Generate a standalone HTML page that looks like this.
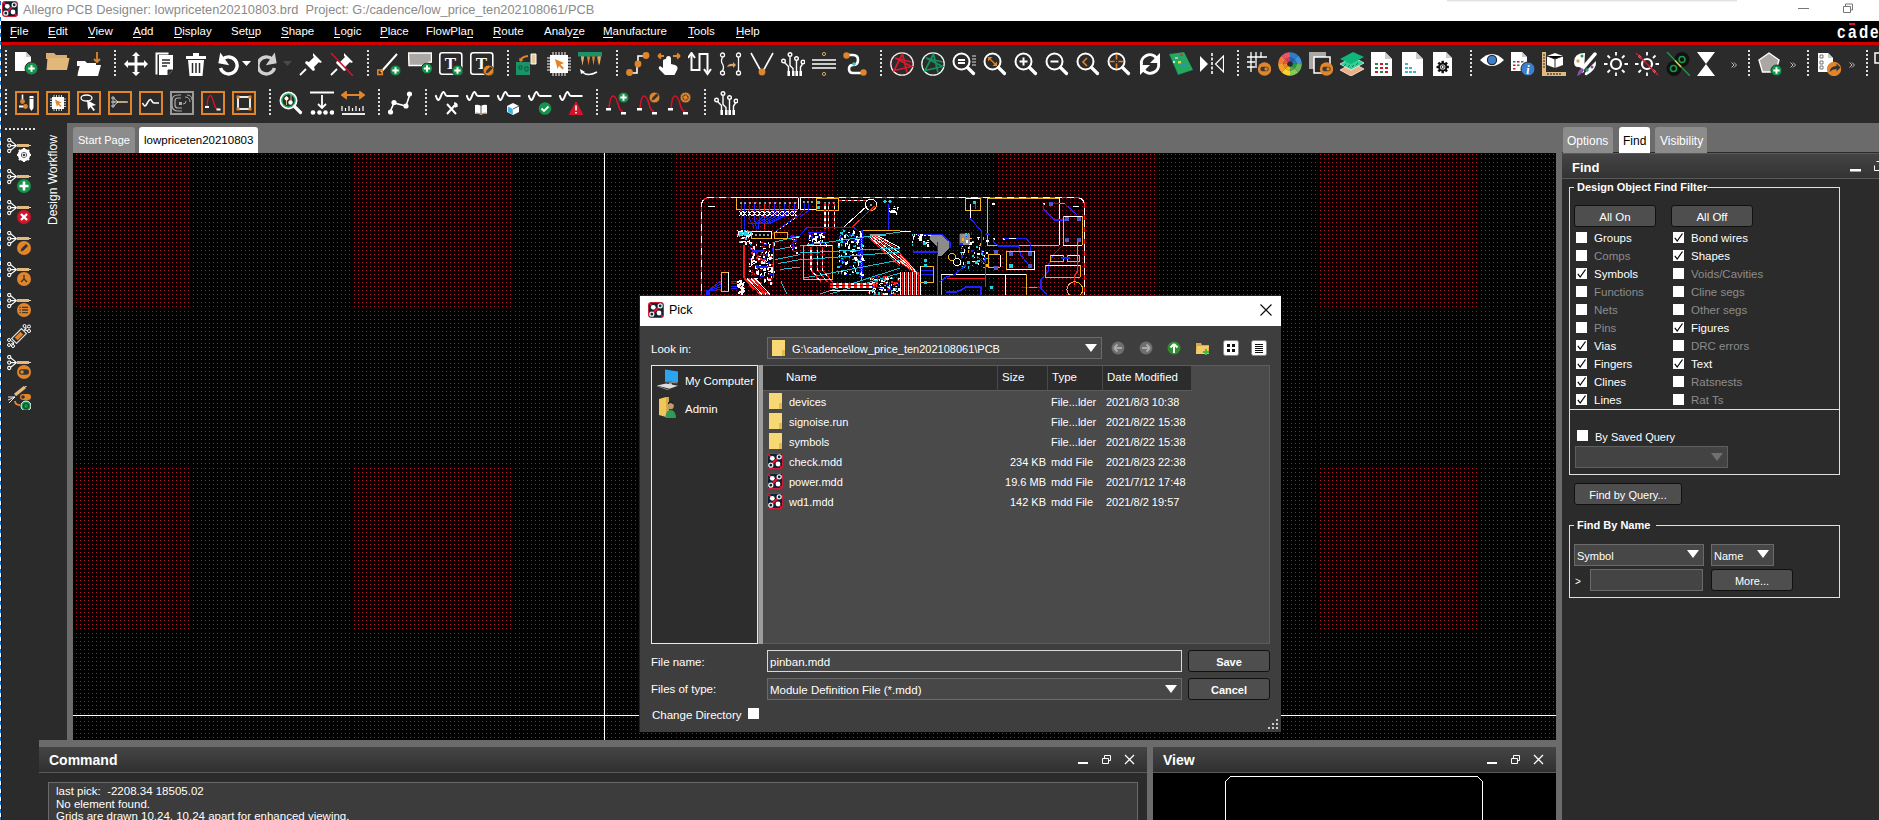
<!DOCTYPE html>
<html><head><meta charset="utf-8">
<style>
*{margin:0;padding:0;box-sizing:border-box}
html,body{width:1879px;height:820px;overflow:hidden;background:#2b2b2b;font-family:"Liberation Sans",sans-serif;font-size:12px;color:#fff}
.a{position:absolute}
.t{position:absolute;white-space:nowrap;line-height:1}
#title{left:0;top:0;width:1879px;height:21px;background:#fff}
#menu{left:0;top:21px;width:1879px;height:21px;background:#000}
#redline{left:0;top:42px;width:1879px;height:3px;background:#d00000}
.mi{position:absolute;top:24px;font-size:11.5px;color:#fff;white-space:nowrap;line-height:14px}
.mi u{text-decoration:none;border-bottom:1px solid #fff}
.grid{background-color:#000;background-image:radial-gradient(circle at 0.5px 0.5px,#b3112a 0.6px,transparent 0.6px);background-size:4px 4px}
.dotv{position:absolute;width:2px;background-image:linear-gradient(#ddd 50%,transparent 50%);background-size:2px 4px}
.doth{position:absolute;height:2px;background-image:linear-gradient(90deg,#ddd 50%,transparent 50%);background-size:4px 2px}
.cb{position:absolute;width:12px;height:12px;background:#fff}
.lbl{position:absolute;font-size:12px;white-space:nowrap;line-height:14px}
.dis{color:#8c8c8c}
.rp{font-size:11.5px;color:#fff;margin-top:1px}
.rp.dis{color:#8c8c8c}
.dlg{font-size:11.5px;color:#fff;margin-top:1px}
.btn{position:absolute;background:#4e4e4e;border:1px solid #111;border-radius:3px;color:#fff;text-align:center;font-size:12px;padding-top:1px}
</style></head><body>
<!-- title bar -->
<div id="title" class="a"></div>
<div class="t" style="left:23px;top:4px;font-size:12.8px;color:#8a8a8a">Allegro PCB Designer: lowpriceten20210803.brd&nbsp;&nbsp;Project: G:/cadence/low_price_ten202108061/PCB</div>

<!-- menu -->
<div id="menu" class="a"></div>
<div id="redline" class="a"></div>
<div class="mi" style="left:10px"><u>F</u>ile</div>
<div class="mi" style="left:48px"><u>E</u>dit</div>
<div class="mi" style="left:88px"><u>V</u>iew</div>
<div class="mi" style="left:133px"><u>A</u>dd</div>
<div class="mi" style="left:174px"><u>D</u>isplay</div>
<div class="mi" style="left:231px">Set<u>u</u>p</div>
<div class="mi" style="left:281px"><u>S</u>hape</div>
<div class="mi" style="left:334px"><u>L</u>ogic</div>
<div class="mi" style="left:380px"><u>P</u>lace</div>
<div class="mi" style="left:426px">FlowPla<u>n</u></div>
<div class="mi" style="left:493px"><u>R</u>oute</div>
<div class="mi" style="left:544px">Analy<u>z</u>e</div>
<div class="mi" style="left:603px"><u>M</u>anufacture</div>
<div class="mi" style="left:688px"><u>T</u>ools</div>
<div class="mi" style="left:736px"><u>H</u>elp</div>


<!-- TOOLBAR START -->
<div class="dotv" style="left:5px;top:50px;height:26px"></div>
<div class="dotv" style="left:114px;top:50px;height:26px"></div>
<div class="dotv" style="left:367px;top:50px;height:26px"></div>
<div class="dotv" style="left:507px;top:50px;height:26px"></div>
<div class="dotv" style="left:616px;top:50px;height:26px"></div>
<div class="dotv" style="left:880px;top:50px;height:26px"></div>
<div class="dotv" style="left:1237px;top:50px;height:26px"></div>
<div class="dotv" style="left:1470px;top:50px;height:26px"></div>
<div class="dotv" style="left:1748px;top:50px;height:26px"></div>
<div class="dotv" style="left:1807px;top:50px;height:26px"></div>
<div class="dotv" style="left:1866px;top:50px;height:26px"></div>
<div class="dotv" style="left:5px;top:89px;height:26px"></div>
<div class="dotv" style="left:269px;top:89px;height:26px"></div>
<div class="dotv" style="left:378px;top:89px;height:26px"></div>
<div class="dotv" style="left:425px;top:89px;height:26px"></div>
<div class="dotv" style="left:596px;top:89px;height:26px"></div>
<div class="dotv" style="left:704px;top:89px;height:26px"></div>
<svg class="a" style="left:15px;top:52px" width="24" height="24" viewBox="0 0 24 24"><path d="M0 0h11l5 5v14h-16z" fill="#fff"/><path d="M11 0v5h5" fill="#ccc"/><circle cx="16.5" cy="16.5" r="6.5" fill="#14934a" stroke="#2b2b2b" stroke-width="1"/><path d="M13.3 16.5h6.4M16.5 13.3v6.4" stroke="#fff" stroke-width="2"/></svg>
<svg class="a" style="left:46px;top:52px" width="24" height="24" viewBox="0 0 24 24"><path d="M0 1h8l2 2h11v4H0z" fill="#d9ae70"/><path d="M1.5 6h22l-2.5 12H0.5z" fill="#e2b77a"/></svg>
<svg class="a" style="left:77px;top:52px" width="24" height="24" viewBox="0 0 24 24"><path d="M0 9h8l2 2h9v3H0z" fill="#fff"/><path d="M3 13h21l-3 11H0z" fill="#fff"/><path d="M0 14v10" stroke="#2b2b2b" stroke-width="1"/><path d="M20 0v10M17 7l3 3 3-3" stroke="#e0852a" stroke-width="1.8" fill="none"/></svg>
<svg class="a" style="left:124px;top:52px" width="24" height="24" viewBox="0 0 24 24"><path d="M12 0l4 4h-2.6v6.6H20V8l4 4-4 4v-2.6h-6.6V20H16l-4 4-4-4h2.6v-6.6H4V16l-4-4 4-4v2.6h6.6V4H8z" fill="#fff"/></svg>
<svg class="a" style="left:155px;top:52px" width="24" height="24" viewBox="0 0 24 24"><path d="M0.5 0.5h13v2H2.5v20h-2z" fill="#fff"/><path d="M4 3h14v15l-5 5H4z" fill="#fff"/><path d="M7 8h8M7 11h8M7 14h5" stroke="#2b2b2b" stroke-width="1.6"/><path d="M13 23v-5h5" fill="#2b2b2b" stroke="#2b2b2b"/></svg>
<svg class="a" style="left:186px;top:52px" width="24" height="24" viewBox="0 0 24 24"><path d="M0 4h20v3H0z" fill="#fff"/><path d="M7 1h6v3H7z" fill="#fff"/><path d="M2 8h16l-1.5 16h-13z" fill="#fff"/><path d="M6.5 11v10M10 11v10M13.5 11v10" stroke="#2b2b2b" stroke-width="1.5"/></svg>
<svg class="a" style="left:217px;top:52px" width="24" height="24" viewBox="0 0 24 24"><path d="M5.5 7.5A8.5 8.5 0 1 1 3.5 16" fill="none" stroke="#fff" stroke-width="3.4"/><path d="M2 1v11h11z" fill="#fff" transform="rotate(10 6 8)"/></svg>
<svg class="a" style="left:258px;top:52px" width="24" height="24" viewBox="0 0 24 24"><path d="M14.5 7.5A8.5 8.5 0 1 0 16.5 16" fill="none" stroke="#d0d0d0" stroke-width="3.4"/><path d="M18 1v11H7z" fill="#d0d0d0" transform="rotate(-10 14 8)"/></svg>
<svg class="a" style="left:299px;top:52px" width="24" height="24" viewBox="0 0 24 24"><path d="M14 1l9 9-2 1-1-1-5 5 1 3-2 1-8-8 1-2 3 1 5-5-1-1z" fill="#fff"/><path d="M7 17L1 23" stroke="#fff" stroke-width="1.8"/></svg>
<svg class="a" style="left:330px;top:52px" width="24" height="24" viewBox="0 0 24 24"><path d="M14 1l9 9-2 1-1-1-5 5 1 3-2 1-8-8 1-2 3 1 5-5-1-1z" fill="#fff"/><path d="M7 17L1 23" stroke="#fff" stroke-width="1.8"/></svg>
<svg class="a" style="left:377px;top:52px" width="24" height="24" viewBox="0 0 24 24"><path d="M4 20L20 2" stroke="#fff" stroke-width="2"/><rect x="0.8" y="18" width="4.5" height="4.5" fill="none" stroke="#e0852a" stroke-width="1.6"/><circle cx="18.5" cy="18.5" r="5.5" fill="#14934a" stroke="#2b2b2b" stroke-width="1"/><path d="M15.3 18.5h6.4M18.5 15.3v6.4" stroke="#fff" stroke-width="2"/></svg>
<svg class="a" style="left:408px;top:52px" width="24" height="24" viewBox="0 0 24 24"><path d="M0.5 1h23v9q-5 0-8 3.5h-14.5z" fill="#aaa7a5" stroke="#fff" stroke-width="1.4"/><circle cx="19" cy="16.5" r="5.5" fill="#14934a" stroke="#2b2b2b" stroke-width="1"/><path d="M15.8 16.5h6.4M19 13.3v6.4" stroke="#fff" stroke-width="2"/></svg>
<svg class="a" style="left:439px;top:52px" width="24" height="24" viewBox="0 0 24 24"><rect x="0.8" y="0.8" width="22" height="21.5" rx="2.5" fill="none" stroke="#fff" stroke-width="1.6"/><text x="11.5" y="17" font-family="Liberation Serif" font-size="17" font-weight="bold" fill="#fff" text-anchor="middle">T</text></svg>
<svg class="a" style="left:470px;top:52px" width="24" height="24" viewBox="0 0 24 24"><rect x="0.8" y="0.8" width="22" height="21.5" rx="2.5" fill="none" stroke="#fff" stroke-width="1.6"/><text x="11.5" y="17" font-family="Liberation Serif" font-size="17" font-weight="bold" fill="#fff" text-anchor="middle">T</text></svg>
<svg class="a" style="left:516px;top:52px" width="24" height="24" viewBox="0 0 24 24"><path d="M0 10h14v13H0z" fill="#199367"/><path d="M3 14h3v3H3zM9 15h3v4H9z" fill="none" stroke="#0c5c3e" stroke-width="1"/><path d="M15 2h5v10h-5z" fill="#e6c99b" stroke="#fff"/><path d="M4 9q1-4 8-5" stroke="#e0852a" stroke-width="2" fill="none"/><path d="M3 6l1.5 4 3-2z" fill="#e0852a"/></svg>
<svg class="a" style="left:547px;top:52px" width="24" height="24" viewBox="0 0 24 24"><rect x="3" y="3" width="18" height="18" fill="#fff"/><path d="M6 0v24M9 0v24M12 0v24M15 0v24M18 0v24M0 6h24M0 9h24M0 12h24M0 15h24M0 18h24" stroke="#fff" stroke-width="1"/><rect x="4" y="4" width="16" height="16" fill="#fff"/><path d="M8 7l9 4-3.5 1.5L17 16l-1.5 1.5-3.5-3.5L10.5 17z" fill="#e0852a"/></svg>
<svg class="a" style="left:578px;top:52px" width="24" height="24" viewBox="0 0 24 24"><rect x="0" y="0" width="24" height="4.5" fill="#199367"/><path d="M3 4.5h3l-1.5 9zM9 4.5h3l-1.5 9zM14 4.5h3l-1.5 9zM19 4.5h3l-1.5 9z" fill="#e0852a"/><path d="M3 4.5h3l-1.5 9z" fill="#d8b27c"/><path d="M20 4.5h3l-1.5 9z" fill="#d8b27c"/><path d="M4 20q6 5 15 0" stroke="#fff" stroke-width="1.6" fill="none"/><path d="M2 17l1 5 4-2z" fill="#fff"/></svg>
<svg class="a" style="left:626px;top:52px" width="24" height="24" viewBox="0 0 24 24"><path d="M3 21h8v-9h1v-8h8" stroke="#fff" stroke-width="1.6" fill="none"/><circle cx="3.5" cy="20.5" r="3.4" fill="#e0852a"/><circle cx="12" cy="12" r="3.4" fill="#e0852a"/><circle cx="20" cy="3.5" r="3.4" fill="#e0852a"/></svg>
<svg class="a" style="left:657px;top:52px" width="24" height="24" viewBox="0 0 24 24"><path d="M9 7q0-3 2.5-3t2.5 3v5l4 1q3 1 2.5 4l-3 6H8l-6-6q-1-2 1-3l3 2V9q0-2 3-2z" fill="#fff"/><path d="M1 4h6M1 4l3-2.5M1 4l3 2.5M16 4h7M23 4l-3-2.5M23 4l-3 2.5" stroke="#e0852a" stroke-width="1.8" fill="none"/></svg>
<svg class="a" style="left:688px;top:52px" width="24" height="24" viewBox="0 0 24 24"><path d="M3.5 3V18H11.5V2H19.5V20" stroke="#fff" stroke-width="2" fill="none"/><path d="M0 6l3.5-5 3.5 5M16 17l3.5 5 3.5-5" stroke="#fff" stroke-width="2" fill="none"/></svg>
<svg class="a" style="left:719px;top:52px" width="24" height="24" viewBox="0 0 24 24"><circle cx="3.5" cy="3" r="2" fill="none" stroke="#fff" stroke-width="1.3"/><circle cx="3.5" cy="21" r="2" fill="none" stroke="#fff" stroke-width="1.3"/><circle cx="19.5" cy="3" r="2" fill="none" stroke="#fff" stroke-width="1.3"/><circle cx="19.5" cy="21" r="2" fill="none" stroke="#fff" stroke-width="1.3"/><path d="M3.5 5q-2 4 0 7t0 7" stroke="#fff" stroke-width="1.3" fill="none"/><path d="M19.5 5v14" stroke="#fff" stroke-width="1.3"/><path d="M8 15q2-4 6-3v-2l3 3-3 3v-2q-3 0-6 1z" fill="#d8a66a"/></svg>
<svg class="a" style="left:750px;top:52px" width="24" height="24" viewBox="0 0 24 24"><path d="M1 1l11 20L23 1" stroke="#fff" stroke-width="1.6" fill="none"/><circle cx="12" cy="20" r="3.4" fill="#e0852a"/></svg>
<svg class="a" style="left:781px;top:52px" width="24" height="24" viewBox="0 0 24 24"><g stroke="#fff" stroke-width="1.4" fill="none"><circle cx="9" cy="2.5" r="1.8"/><circle cx="2.5" cy="9" r="1.8"/><circle cx="15.5" cy="6.5" r="1.8"/><circle cx="22" cy="10" r="1.8"/><path d="M9 4.5v9l3 3v7M3.5 10.5l4 4v9M15.5 8.5v15M21.5 12l-2 3v8.5"/></g><path d="M6.5 19h2.5v5H6.5zM11 19h2.5v5H11zM14.5 19h2.5v5h-2.5zM18.5 19h2.5v5h-2.5z" fill="#fff"/></svg>
<svg class="a" style="left:812px;top:52px" width="24" height="24" viewBox="0 0 24 24"><path d="M0 8h24M0 12h24M0 16h24" stroke="#fff" stroke-width="1.6"/><circle cx="12" cy="2" r="1.6" fill="none" stroke="#d8a66a" stroke-width="1"/><circle cx="12" cy="22" r="1.6" fill="none" stroke="#d8a66a" stroke-width="1"/></svg>
<svg class="a" style="left:843px;top:52px" width="24" height="24" viewBox="0 0 24 24"><path d="M3 3h7q5 0 5 5t-5 5q-4 0-4 4t4 4h10" stroke="#fff" stroke-width="2.6" fill="none"/><circle cx="3.5" cy="3.5" r="3.2" fill="#e0852a"/><circle cx="20.5" cy="20.5" r="3.2" fill="#e0852a"/><circle cx="11" cy="12" r="1.8" fill="#3cc3c8"/></svg>
<svg class="a" style="left:890px;top:52px" width="24" height="24" viewBox="0 0 24 24"><circle cx="12" cy="12" r="11.2" fill="none" stroke="#fbe9ea" stroke-width="1.3"/><path d="M12.5 2L4 18.5L21.5 14.5L5 6L21.5 10M12.5 2L17 20.5" stroke="#d7192d" stroke-width="1.7" fill="none"/></svg>
<svg class="a" style="left:921px;top:52px" width="24" height="24" viewBox="0 0 24 24"><circle cx="12" cy="12" r="11.2" fill="none" stroke="#e9f7f0" stroke-width="1.3"/><path d="M12.5 2L4 18.5L21.5 14.5L5 6L21.5 10M12.5 2L17 20.5" stroke="#14915e" stroke-width="1.7" fill="none"/></svg>
<svg class="a" style="left:952px;top:52px" width="24" height="24" viewBox="0 0 24 24"><circle cx="9.5" cy="9.5" r="8" fill="none" stroke="#fff" stroke-width="2"/><path d="M15.5 15.5l6 6" stroke="#fff" stroke-width="3.2" stroke-linecap="round"/><path d="M6 8h7M6 11h7" stroke="#fff" stroke-width="1.8"/><path d="M20 4h4M20 7h4M20 10h4M20 13h4" stroke="#ddd" stroke-width="1"/></svg>
<svg class="a" style="left:983px;top:52px" width="24" height="24" viewBox="0 0 24 24"><circle cx="9.5" cy="9.5" r="8" fill="none" stroke="#fff" stroke-width="2"/><path d="M15.5 15.5l6 6" stroke="#fff" stroke-width="3.2" stroke-linecap="round"/><path d="M7 7l5 5" stroke="#e0852a" stroke-width="1.3"/><path d="M5 5h4.5L5 9.5zM14 14h-4.5L14 9.5z" fill="#e0852a"/></svg>
<svg class="a" style="left:1014px;top:52px" width="24" height="24" viewBox="0 0 24 24"><circle cx="9.5" cy="9.5" r="8" fill="none" stroke="#fff" stroke-width="2"/><path d="M15.5 15.5l6 6" stroke="#fff" stroke-width="3.2" stroke-linecap="round"/><path d="M5.5 9.5h8M9.5 5.5v8" stroke="#fff" stroke-width="2"/></svg>
<svg class="a" style="left:1045px;top:52px" width="24" height="24" viewBox="0 0 24 24"><circle cx="9.5" cy="9.5" r="8" fill="none" stroke="#fff" stroke-width="2"/><path d="M15.5 15.5l6 6" stroke="#fff" stroke-width="3.2" stroke-linecap="round"/><path d="M5.5 9.5h8" stroke="#fff" stroke-width="2"/></svg>
<svg class="a" style="left:1076px;top:52px" width="24" height="24" viewBox="0 0 24 24"><circle cx="9.5" cy="9.5" r="8" fill="none" stroke="#fff" stroke-width="2"/><path d="M15.5 15.5l6 6" stroke="#fff" stroke-width="3.2" stroke-linecap="round"/><path d="M11 6l-4 4 4 4" stroke="#e0852a" stroke-width="1.6" fill="none"/></svg>
<svg class="a" style="left:1107px;top:52px" width="24" height="24" viewBox="0 0 24 24"><circle cx="9.5" cy="9.5" r="8" fill="none" stroke="#fff" stroke-width="2"/><path d="M15.5 15.5l6 6" stroke="#fff" stroke-width="3.2" stroke-linecap="round"/><path d="M2 9.5h15M9.5 2v15" stroke="#e0852a" stroke-width="1.6"/><circle cx="9.5" cy="9.5" r="2" fill="#2b2b2b"/><circle cx="9.5" cy="9.5" r="0.6" fill="#e0852a"/></svg>
<svg class="a" style="left:1138px;top:52px" width="24" height="24" viewBox="0 0 24 24"><path d="M3.5 13A8.5 8.5 0 0 1 18.5 6" stroke="#fff" stroke-width="3" fill="none"/><path d="M22 1v10H12z" fill="#fff"/><path d="M20.5 11A8.5 8.5 0 0 1 5.5 18" stroke="#fff" stroke-width="3" fill="none"/><path d="M2 23V13h10z" fill="#fff"/></svg>
<svg class="a" style="left:1169px;top:52px" width="24" height="24" viewBox="0 0 24 24"><path d="M0 2l15-2 9 18-15 5z" fill="#1d8f5a"/><path d="M1 2.5l14-2 8.5 17-14 4.5z" fill="#25a862"/><rect x="11" y="2" width="3" height="2" fill="#8b5a44"/><rect x="9" y="9" width="3" height="2.5" fill="#e8d33a"/><rect x="13" y="11" width="3" height="3" fill="#2a8fd6"/><rect x="6" y="5" width="3" height="2" fill="#bbb"/><circle cx="5" cy="10" r="1.2" fill="#9fd"/></svg>
<svg class="a" style="left:1200px;top:52px" width="24" height="24" viewBox="0 0 24 24"><path d="M0 4l8 8-8 8z" fill="#fff"/><path d="M12 1v22" stroke="#fff" stroke-width="1.6" stroke-dasharray="3 1.5"/><path d="M23.5 4l-8 8 8 8z" fill="none" stroke="#fff" stroke-width="1.2"/></svg>
<svg class="a" style="left:1247px;top:52px" width="24" height="24" viewBox="0 0 24 24"><path d="M4 0v20M9 0v16M14 0v6M0 5h20M0 10h8M0 15h8" stroke="#fff" stroke-width="1.3"/><circle cx="17.5" cy="17" r="6.7" fill="#e0852a"/><rect x="13.3" y="14.8" width="8.4" height="4.4" rx="2.2" fill="#3a3a3a"/><circle cx="19.1" cy="17" r="1.7" fill="#e0852a"/></svg>
<svg class="a" style="left:1278px;top:52px" width="24" height="24" viewBox="0 0 24 24"><path d="M12.00 0.20A11.8 11.8 0 0 1 20.34 3.66L16.60 7.40A6.5 6.5 0 0 0 12.00 5.50z" fill="#2f7bc8"/><path d="M20.34 3.66A11.8 11.8 0 0 1 23.80 12.00L18.50 12.00A6.5 6.5 0 0 0 16.60 7.40z" fill="#3f92d8"/><path d="M23.80 12.00A11.8 11.8 0 0 1 20.34 20.34L16.60 16.60A6.5 6.5 0 0 0 18.50 12.00z" fill="#65b85a"/><path d="M20.34 20.34A11.8 11.8 0 0 1 12.00 23.80L12.00 18.50A6.5 6.5 0 0 0 16.60 16.60z" fill="#8bc94f"/><path d="M12.00 23.80A11.8 11.8 0 0 1 3.66 20.34L7.40 16.60A6.5 6.5 0 0 0 12.00 18.50z" fill="#f9d22d"/><path d="M3.66 20.34A11.8 11.8 0 0 1 0.20 12.00L5.50 12.00A6.5 6.5 0 0 0 7.40 16.60z" fill="#f2a033"/><path d="M0.20 12.00A11.8 11.8 0 0 1 3.66 3.66L7.40 7.40A6.5 6.5 0 0 0 5.50 12.00z" fill="#f2793a"/><path d="M3.66 3.66A11.8 11.8 0 0 1 12.00 0.20L12.00 5.50A6.5 6.5 0 0 0 7.40 7.40z" fill="#ec5460"/><path d="M12.00 5.50A6.5 6.5 0 0 1 16.60 7.40L13.84 10.16A2.6 2.6 0 0 0 12.00 9.40z" fill="#255f9c"/><path d="M16.60 7.40A6.5 6.5 0 0 1 18.50 12.00L14.60 12.00A2.6 2.6 0 0 0 13.84 10.16z" fill="#2d72b0"/><path d="M18.50 12.00A6.5 6.5 0 0 1 16.60 16.60L13.84 13.84A2.6 2.6 0 0 0 14.60 12.00z" fill="#1f9a55"/><path d="M16.60 16.60A6.5 6.5 0 0 1 12.00 18.50L12.00 14.60A2.6 2.6 0 0 0 13.84 13.84z" fill="#4fa543"/><path d="M12.00 18.50A6.5 6.5 0 0 1 7.40 16.60L10.16 13.84A2.6 2.6 0 0 0 12.00 14.60z" fill="#f2b51c"/><path d="M7.40 16.60A6.5 6.5 0 0 1 5.50 12.00L9.40 12.00A2.6 2.6 0 0 0 10.16 13.84z" fill="#e98b22"/><path d="M5.50 12.00A6.5 6.5 0 0 1 7.40 7.40L10.16 10.16A2.6 2.6 0 0 0 9.40 12.00z" fill="#e85a35"/><path d="M7.40 7.40A6.5 6.5 0 0 1 12.00 5.50L12.00 9.40A2.6 2.6 0 0 0 10.16 10.16z" fill="#e0306a"/><circle cx="12" cy="12" r="2.6" fill="#2b2b2b"/></svg>
<svg class="a" style="left:1309px;top:52px" width="24" height="24" viewBox="0 0 24 24"><rect x="0" y="0" width="17" height="17" fill="#aaa7a5"/><rect x="5" y="5" width="16" height="16" fill="#2b2b2b" stroke="#fff" stroke-width="1.5"/><circle cx="17.5" cy="17" r="6.7" fill="#e0852a"/><rect x="13.3" y="14.8" width="8.4" height="4.4" rx="2.2" fill="#3a3a3a"/><circle cx="19.1" cy="17" r="1.7" fill="#e0852a"/></svg>
<svg class="a" style="left:1340px;top:52px" width="24" height="24" viewBox="0 0 24 24"><path d="M0 18l13-7 11 6-13 7z" fill="#eab186" stroke="#fff" stroke-width="0.7"/><path d="M0 12l13-7 11 6-13 7z" fill="#2ed19a" stroke="#fff" stroke-width="0.7"/><path d="M4 14l2-2M8 15l2-2M12 15l2-2M16 13l2-2" stroke="#167a55" stroke-width="1"/><path d="M0 7l13-7 11 5-13 7z" fill="#0fb87a"/></svg>
<svg class="a" style="left:1371px;top:52px" width="24" height="24" viewBox="0 0 24 24"><path d="M0 0h14l7 7v17h-21z" fill="#fff"/><path d="M14 0v7h7" fill="#ccc"/><g><rect x="4" y="11" width="3" height="2" fill="#1a8a4a"/><rect x="9" y="11" width="3" height="2" fill="#d3132a"/><rect x="14" y="11" width="3" height="2" fill="#1a8a4a"/><rect x="4" y="15" width="3" height="2" fill="#1a8a4a"/><rect x="9" y="15" width="3" height="2" fill="#d3132a"/><rect x="14" y="15" width="3" height="2" fill="#d3132a"/><rect x="4" y="19" width="3" height="2" fill="#d3132a"/><rect x="9" y="19" width="3" height="2" fill="#1a8a4a"/><rect x="14" y="19" width="3" height="2" fill="#d3132a"/></g></svg>
<svg class="a" style="left:1402px;top:52px" width="24" height="24" viewBox="0 0 24 24"><path d="M0 0h14l7 7v17h-21z" fill="#fff"/><path d="M14 0v7h7" fill="#ccc"/><g fill="#3ab8c8"><rect x="3" y="11" width="3" height="2"/><rect x="3" y="15" width="3" height="2"/><rect x="7" y="15" width="3" height="2"/><rect x="3" y="19" width="3" height="2"/><rect x="7" y="19" width="3" height="2"/><rect x="11" y="19" width="3" height="2"/></g></svg>
<svg class="a" style="left:1433px;top:52px" width="24" height="24" viewBox="0 0 24 24"><path d="M0 0h13l6 6v18h-19z" fill="#fff"/><path d="M13 0v6h6" fill="#ccc"/><rect x="8.5" y="8.8" width="2.4" height="2.6" fill="#111" transform="rotate(0 9.7 15)"/><rect x="8.5" y="8.8" width="2.4" height="2.6" fill="#111" transform="rotate(45 9.7 15)"/><rect x="8.5" y="8.8" width="2.4" height="2.6" fill="#111" transform="rotate(90 9.7 15)"/><rect x="8.5" y="8.8" width="2.4" height="2.6" fill="#111" transform="rotate(135 9.7 15)"/><rect x="8.5" y="8.8" width="2.4" height="2.6" fill="#111" transform="rotate(180 9.7 15)"/><rect x="8.5" y="8.8" width="2.4" height="2.6" fill="#111" transform="rotate(225 9.7 15)"/><rect x="8.5" y="8.8" width="2.4" height="2.6" fill="#111" transform="rotate(270 9.7 15)"/><rect x="8.5" y="8.8" width="2.4" height="2.6" fill="#111" transform="rotate(315 9.7 15)"/><circle cx="9.7" cy="15" r="4.6" fill="#111"/><circle cx="9.7" cy="15" r="2.6" fill="#fff"/><circle cx="9.7" cy="15" r="1.5" fill="none" stroke="#111" stroke-width="0.9"/></svg>
<svg class="a" style="left:1480px;top:52px" width="24" height="24" viewBox="0 0 24 24"><path d="M0 8q12-12 24 0q-12 12-24 0z" fill="#fff"/><circle cx="12" cy="8" r="5.2" fill="#2b2b2b"/><circle cx="12" cy="8" r="4" fill="#3d7fcc"/></svg>
<svg class="a" style="left:1511px;top:52px" width="24" height="24" viewBox="0 0 24 24"><path d="M0 0h11l5 5v14h-16z" fill="#fff"/><path d="M11 0v5h5" fill="#ccc"/><g><rect x="2" y="9" width="2.5" height="1.5" fill="#1a8a4a"/><rect x="6" y="9" width="2.5" height="1.5" fill="#d3132a"/><rect x="10" y="9" width="2.5" height="1.5" fill="#1a8a4a"/><rect x="2" y="12.5" width="2.5" height="1.5" fill="#d3132a"/><rect x="6" y="12.5" width="2.5" height="1.5" fill="#1a8a4a"/><rect x="2" y="16" width="2.5" height="1.5" fill="#d3132a"/></g><circle cx="17" cy="17" r="7" fill="#3d7fcc" stroke="#2b2b2b"/><text x="17" y="21.5" font-family="Liberation Serif" font-style="italic" font-weight="bold" font-size="12" fill="#fff" text-anchor="middle">i</text></svg>
<svg class="a" style="left:1542px;top:52px" width="24" height="24" viewBox="0 0 24 24"><path d="M0 0h4v20h20v4H0z" fill="#e0b97d"/><path d="M1 3h2M1 6h2M1 9h2M1 12h2M1 15h2M6 21v2M9 21v2M12 21v2M15 21v2M18 21v2" stroke="#2b2b2b" stroke-width="1.2"/><path d="M13 1l8 3v9l-8 3-8-3V4z" fill="#fff"/><path d="M5 4l8 3 8-3M13 7v9" stroke="#2b2b2b" stroke-width="1"/></svg>
<svg class="a" style="left:1573px;top:52px" width="24" height="24" viewBox="0 0 24 24"><path d="M12 1q-11 0-11 9q0 5 4 5t3 3q0 4 3 2" fill="#fff"/><path d="M22 2L10 16" stroke="#fff" stroke-width="3.5" stroke-linecap="round"/><path d="M9 16q-4 2-5 8 5-2 7-6z" fill="#8c4cb0"/><path d="M23 9q1 8-9 14-3 1-2-2l3-4z" fill="#fff"/><circle cx="9" cy="4" r="1.5" fill="#1a9a4e"/><circle cx="5" cy="9" r="1.7" fill="#d3a668"/><circle cx="14" cy="18" r="1.7" fill="#2aa37a"/><circle cx="19" cy="15" r="1.5" fill="#8c4cb0"/></svg>
<svg class="a" style="left:1604px;top:52px" width="24" height="24" viewBox="0 0 24 24"><circle cx="12" cy="12" r="5" fill="none" stroke="#fff" stroke-width="2.2"/><path d="M12 0v3.5M12 20.5V24M0 12h3.5M20.5 12H24M3.5 3.5l2.5 2.5M18 18l2.5 2.5M3.5 20.5L6 18M18 6l2.5-2.5" stroke="#fff" stroke-width="1.8"/></svg>
<svg class="a" style="left:1635px;top:52px" width="24" height="24" viewBox="0 0 24 24"><circle cx="12" cy="12" r="5" fill="none" stroke="#fff" stroke-width="2.2"/><path d="M12 0v3.5M12 20.5V24M0 12h3.5M20.5 12H24M3.5 3.5l2.5 2.5M18 18l2.5 2.5M3.5 20.5L6 18M18 6l2.5-2.5" stroke="#fff" stroke-width="1.8"/><path d="M1 1l22 22" stroke="#d3132a" stroke-width="1.6"/></svg>
<svg class="a" style="left:1666px;top:52px" width="24" height="24" viewBox="0 0 24 24"><circle cx="16" cy="7.5" r="7.5" fill="#111"/><circle cx="8" cy="16.5" r="7.5" fill="#111"/><circle cx="16" cy="7.5" r="3" fill="none" stroke="#1a9a4e" stroke-width="1.6"/><circle cx="7.5" cy="16.5" r="3" fill="none" stroke="#1a9a4e" stroke-width="1.6"/><path d="M1 0l23 24" stroke="#1a9a4e" stroke-width="1.4"/><path d="M9 8.5l6 6.5" stroke="#e6d23a" stroke-width="1.4"/></svg>
<svg class="a" style="left:1697px;top:52px" width="24" height="24" viewBox="0 0 24 24"><path d="M0 0h18L9 12zM0 24h18L9 12z" fill="#fff"/></svg>
<svg class="a" style="left:1758px;top:52px" width="24" height="24" viewBox="0 0 24 24"><path d="M11 1l10 7-3.5 12H4.5L1 8z" fill="#aaa7a5" stroke="#fff" stroke-width="1.4"/><circle cx="18.5" cy="18.5" r="5.5" fill="#14934a" stroke="#2b2b2b" stroke-width="1"/><path d="M15.3 18.5h6.4M18.5 15.3v6.4" stroke="#fff" stroke-width="2"/></svg>
<svg class="a" style="left:1817px;top:52px" width="24" height="24" viewBox="0 0 24 24"><path d="M1 1h10l5 5v14H1z" fill="#fff"/><path d="M11 1v5h5" fill="#ccc"/><path d="M3 3h3v3H3zM3 9h3v3H3zM3 14h3v3H3z" fill="none" stroke="#555" stroke-width="0.8"/><circle cx="17" cy="17" r="7.2" fill="#e0852a"/><path d="M12.5 20q1-6 7-6v-2.5l4 4-4 4V17q-4 0-7 3z" fill="#333"/></svg>
<svg class="a" style="left:439px;top:52px" width="24" height="24" viewBox="0 0 24 24"><circle cx="18.5" cy="18.5" r="5.5" fill="#14934a" stroke="#2b2b2b" stroke-width="1"/><path d="M15.3 18.5h6.4M18.5 15.3v6.4" stroke="#fff" stroke-width="2"/></svg>
<svg class="a" style="left:470px;top:52px" width="24" height="24" viewBox="0 0 24 24"><circle cx="18.5" cy="18.5" r="5.5" fill="#e0852a" stroke="#2b2b2b" stroke-width="1"/><path d="M15.5 21.5l1-3 4-4 2 2-4 4z" fill="#333"/></svg>
<svg class="a" style="left:330px;top:52px" width="24" height="24" viewBox="0 0 24 24"><path d="M1 1l22 23" stroke="#d3132a" stroke-width="1.6"/></svg>
<svg class="a" style="left:242px;top:61px" width="9" height="6" viewBox="0 0 9 6"><path d="M0 0h9l-4.5 5z" fill="#fff"/></svg>
<svg class="a" style="left:283px;top:61px" width="9" height="6" viewBox="0 0 9 6"><path d="M0 0h9l-4.5 5z" fill="#4a4a4a"/></svg>
<svg class="a" style="left:1731px;top:62px" width="6" height="6" viewBox="0 0 6 6"><path d="M0.5 0.5l2.5 2.5-2.5 2.5M3 0.5l2.5 2.5L3 5.5" stroke="#ccc" stroke-width="0.9" fill="none"/></svg>
<svg class="a" style="left:1790px;top:62px" width="6" height="6" viewBox="0 0 6 6"><path d="M0.5 0.5l2.5 2.5-2.5 2.5M3 0.5l2.5 2.5L3 5.5" stroke="#ccc" stroke-width="0.9" fill="none"/></svg>
<svg class="a" style="left:1849px;top:62px" width="6" height="6" viewBox="0 0 6 6"><path d="M0.5 0.5l2.5 2.5-2.5 2.5M3 0.5l2.5 2.5L3 5.5" stroke="#ccc" stroke-width="0.9" fill="none"/></svg>
<svg class="a" style="left:1874px;top:52px" width="5" height="12" viewBox="0 0 5 12"><path d="M1 1h5v10H1z" fill="none" stroke="#fff" stroke-width="1.5"/></svg>
<svg class="a" style="left:15px;top:91px" width="24" height="24" viewBox="0 0 24 24"><rect x="1" y="1" width="22" height="22" fill="#2b2b2b" stroke="#e0852a" stroke-width="2"/><path d="M7.5 3.5v6" stroke="#fff" stroke-width="1.6"/><circle cx="7.5" cy="10.5" r="2.4" fill="#e0852a"/><path d="M4 15.5h6" stroke="#fff" stroke-width="2"/><circle cx="10.5" cy="15.5" r="2.4" fill="#e0852a"/><path d="M14.5 5h4v12l-2 3-2-3z" fill="#fff"/><path d="M14.5 7.5h4" stroke="#2b2b2b" stroke-width="0.8"/></svg>
<svg class="a" style="left:46px;top:91px" width="24" height="24" viewBox="0 0 24 24"><rect x="1" y="1" width="22" height="22" fill="#2b2b2b" stroke="#e0852a" stroke-width="2"/><rect x="6" y="6" width="12" height="12" fill="#fff"/><path d="M8 4v16M10.5 4v16M13 4v16M15.5 4v16M4 8h16M4 10.5h16M4 13h16M4 15.5h16" stroke="#fff" stroke-width="0.8"/><rect x="6.5" y="6.5" width="11" height="11" fill="#fff"/><path d="M9 8.5l6.5 3-2.5 1 2.5 2.5-1 1-2.5-2.5-1 2.5z" fill="#e0852a"/></svg>
<svg class="a" style="left:77px;top:91px" width="24" height="24" viewBox="0 0 24 24"><rect x="1" y="1" width="22" height="22" fill="#2b2b2b" stroke="#e0852a" stroke-width="2"/><ellipse cx="9.5" cy="7" rx="5.5" ry="3" fill="none" stroke="#fff" stroke-width="1.3"/><path d="M10 9l9 5-4 1 3 4-1.5 1-3-4-2.5 3z" fill="#fff"/></svg>
<svg class="a" style="left:108px;top:91px" width="24" height="24" viewBox="0 0 24 24"><rect x="1" y="1" width="22" height="22" fill="#2b2b2b" stroke="#e0852a" stroke-width="2"/><g stroke="#fff" stroke-width="0.8" fill="none"><circle cx="5" cy="7" r="1.2"/><circle cx="5" cy="11" r="1.2"/><circle cx="5" cy="15" r="1.2"/><path d="M6 7.5l4 3.5M6 11h4M6 14.5l4-3.5"/></g><path d="M10 11h8" stroke="#d8b27c" stroke-width="1.8"/><path d="M18 11h2" stroke="#fff" stroke-width="1"/></svg>
<svg class="a" style="left:139px;top:91px" width="24" height="24" viewBox="0 0 24 24"><rect x="1" y="1" width="22" height="22" fill="#2b2b2b" stroke="#e0852a" stroke-width="2"/><path d="M3.5 12C5 15 6 16 7.5 13.5S10 8 11.5 8.5 13 12 15 12H20" stroke="#fff" stroke-width="1.6" fill="none"/></svg>
<svg class="a" style="left:170px;top:91px" width="24" height="24" viewBox="0 0 24 24"><rect x="1" y="1" width="22" height="22" fill="#2b2b2b" stroke="#9a9a9a" stroke-width="2"/><path d="M12 17H8q-3 0-3-3v-4q0-3 3-3h3M12 20H8q-6 0-6-6v-4q0-6 6-6h3" stroke="#aaa" stroke-width="1.2" fill="none"/><rect x="9" y="11" width="3" height="3" fill="#aaa"/><path d="M13 13q3 0 3-3M15 6q5 0 5 5M17 4q5 0 5 5" stroke="#aaa" stroke-width="1" fill="none"/></svg>
<svg class="a" style="left:201px;top:91px" width="24" height="24" viewBox="0 0 24 24"><rect x="1" y="1" width="22" height="22" fill="#2b2b2b" stroke="#e0852a" stroke-width="2"/><path d="M6 15C6.5 8 8 4.5 9.5 4.5S12 9 13 12.5 15 18 17 18" stroke="#d3132a" stroke-width="1.4" fill="none"/><path d="M4 15h4v2H4zM15.5 17.5h4v2h-4z" fill="#fff"/></svg>
<svg class="a" style="left:232px;top:91px" width="24" height="24" viewBox="0 0 24 24"><rect x="1" y="1" width="22" height="22" fill="#2b2b2b" stroke="#e0852a" stroke-width="2"/><rect x="6" y="6" width="12" height="12" fill="none" stroke="#fff" stroke-width="1.8"/><rect x="4.5" y="4.5" width="3" height="3" fill="#e0852a"/><rect x="16.5" y="4.5" width="3" height="3" fill="#e0852a"/><rect x="4.5" y="16.5" width="3" height="3" fill="#e0852a"/><rect x="16.5" y="16.5" width="3" height="3" fill="#e0852a"/></svg>
<svg class="a" style="left:279px;top:91px" width="24" height="24" viewBox="0 0 24 24"><circle cx="9.5" cy="9.5" r="8" fill="none" stroke="#fff" stroke-width="2"/><circle cx="9.5" cy="9.5" r="6.6" fill="none" stroke="#27c46f" stroke-width="1.2"/><path d="M15.5 15.5l6 6" stroke="#fff" stroke-width="3.2" stroke-linecap="round"/><path d="M7.5 5v9M12 4v9" stroke="#d8b27c" stroke-width="1"/><circle cx="7.5" cy="7.5" r="2" fill="#fff"/><circle cx="11.5" cy="11.5" r="2.2" fill="#fff"/></svg>
<svg class="a" style="left:310px;top:91px" width="24" height="24" viewBox="0 0 24 24"><path d="M0 1.5h24" stroke="#fff" stroke-width="2"/><path d="M12 4v13M8 13l4 4 4-4" stroke="#fff" stroke-width="1.8" fill="none"/><circle cx="3" cy="21.5" r="2.3" fill="#fff"/><circle cx="9.5" cy="21.5" r="2.3" fill="#fff"/><circle cx="15.5" cy="21.5" r="2.3" fill="#fff"/><circle cx="22" cy="21.5" r="2.3" fill="#fff"/></svg>
<svg class="a" style="left:341px;top:91px" width="24" height="24" viewBox="0 0 24 24"><path d="M1 4h22M1 4l4-3v6zM23 4l-4-3v6z" stroke="#e0852a" stroke-width="1.8" fill="#e0852a"/><path d="M1 23h23" stroke="#fff" stroke-width="1.8"/><path d="M1 15v5M4.5 17v3M8 15v5M11.5 17v3M15 15v5M18.5 17v3M22 15v5" stroke="#fff" stroke-width="1.2"/></svg>
<svg class="a" style="left:388px;top:91px" width="24" height="24" viewBox="0 0 24 24"><path d="M2 21l4-9 12 3 4-12" stroke="#fff" stroke-width="1.6" fill="none"/><circle cx="2.5" cy="21" r="2.6" fill="#fff"/><circle cx="6" cy="11.5" r="2.6" fill="#fff"/><circle cx="18" cy="15" r="2.6" fill="#fff"/><circle cx="21.5" cy="3" r="2.6" fill="#fff"/></svg>
<svg class="a" style="left:435px;top:91px" width="24" height="24" viewBox="0 0 24 24"><path d="M0.5 4C2 8 3 10.5 4.5 8S7 0.8 8.5 1 10 5 12 5H23.5" stroke="#fff" stroke-width="2" fill="none"/><path d="M12 13l9 10M21 13l-9 10" stroke="#fff" stroke-width="2"/><path d="M19 12q3 0 3 3l-2 1" stroke="#fff" stroke-width="1.5" fill="none"/></svg>
<svg class="a" style="left:466px;top:91px" width="24" height="24" viewBox="0 0 24 24"><path d="M0.5 4C2 8 3 10.5 4.5 8S7 0.8 8.5 1 10 5 12 5H23.5" stroke="#fff" stroke-width="2" fill="none"/><path d="M9 14q3-1 6 1 3-2 6-1v8q-3-1-6 1-3-2-6-1z" fill="#fff"/><path d="M15 15v8" stroke="#2b2b2b" stroke-width="0.8"/><path d="M9 22.5q3-1 6 1 3-2 6-1" stroke="#d8b27c" stroke-width="1" fill="none"/></svg>
<svg class="a" style="left:497px;top:91px" width="24" height="24" viewBox="0 0 24 24"><path d="M0.5 4C2 8 3 10.5 4.5 8S7 0.8 8.5 1 10 5 12 5H23.5" stroke="#fff" stroke-width="2" fill="none"/><path d="M16 12l6 3v6l-6 3-6-3v-6z" fill="#fff"/><path d="M10.8 15.5l5 2.5v5.5l-5-2.5z" fill="#3ab4e8"/><path d="M16 18l6-3" stroke="#2b2b2b" stroke-width="0.8"/></svg>
<svg class="a" style="left:528px;top:91px" width="24" height="24" viewBox="0 0 24 24"><path d="M0.5 4C2 8 3 10.5 4.5 8S7 0.8 8.5 1 10 5 12 5H23.5" stroke="#fff" stroke-width="2" fill="none"/><circle cx="17" cy="17.5" r="6.3" fill="#14934a"/><path d="M13.5 17.5l2.5 2.5 4.5-4.5" stroke="#fff" stroke-width="1.8" fill="none"/></svg>
<svg class="a" style="left:559px;top:91px" width="24" height="24" viewBox="0 0 24 24"><path d="M0.5 4C2 8 3 10.5 4.5 8S7 0.8 8.5 1 10 5 12 5H23.5" stroke="#fff" stroke-width="2" fill="none"/><path d="M17 10l7.5 14h-15z" fill="#d3132a"/><path d="M17 14.5v5M17 21v1.5" stroke="#fff" stroke-width="1.6"/></svg>
<svg class="a" style="left:606px;top:91px" width="24" height="24" viewBox="0 0 24 24"><path d="M3 18q1-13 4-13t5 8 5 7" stroke="#d3132a" stroke-width="1.6" fill="none"/><path d="M0 17h5v2.5H0zM15 21h5v2.5h-5z" fill="#fff"/><circle cx="17.5" cy="6.5" r="5.5" fill="#14934a" stroke="#2b2b2b" stroke-width="1"/><path d="M14.3 6.5h6.4M17.5 3.3v6.4" stroke="#fff" stroke-width="2"/></svg>
<svg class="a" style="left:637px;top:91px" width="24" height="24" viewBox="0 0 24 24"><path d="M3 18q1-13 4-13t5 8 5 7" stroke="#d3132a" stroke-width="1.6" fill="none"/><path d="M0 17h5v2.5H0zM15 21h5v2.5h-5z" fill="#fff"/><circle cx="17.5" cy="6.5" r="5.5" fill="#e0852a" stroke="#2b2b2b" stroke-width="1"/><path d="M14.5 9.5l1-3 4-4 2 2-4 4z" fill="#333"/></svg>
<svg class="a" style="left:668px;top:91px" width="24" height="24" viewBox="0 0 24 24"><path d="M3 18q1-13 4-13t5 8 5 7" stroke="#d3132a" stroke-width="1.6" fill="none"/><path d="M0 17h5v2.5H0zM15 21h5v2.5h-5z" fill="#fff"/><circle cx="17.5" cy="6.5" r="5.5" fill="#e0852a" stroke="#2b2b2b"/><circle cx="17.5" cy="6.5" r="2.6" fill="none" stroke="#2b2b2b" stroke-width="1.2" stroke-dasharray="1.2 0.8"/></svg>
<svg class="a" style="left:714px;top:91px" width="24" height="24" viewBox="0 0 24 24"><g stroke="#fff" stroke-width="1.4" fill="none"><circle cx="9" cy="2.5" r="1.8"/><circle cx="2.5" cy="9" r="1.8"/><circle cx="15.5" cy="6.5" r="1.8"/><circle cx="22" cy="10" r="1.8"/><path d="M9 4.5v9l3 3v7M3.5 10.5l4 4v9M15.5 8.5v15M21.5 12l-2 3v8.5"/></g><path d="M6.5 19h2.5v5H6.5zM11 19h2.5v5H11zM14.5 19h2.5v5h-2.5zM18.5 19h2.5v5h-2.5z" fill="#fff"/></svg>
<div class="doth" style="left:5px;top:128px;width:30px"></div>
<svg class="a" style="left:7px;top:138px" width="24" height="24" viewBox="0 0 24 24"><g stroke="#fff" stroke-width="1.1" fill="none"><circle cx="2.2" cy="2" r="1.6"/><circle cx="2.2" cy="7.6" r="1.6"/><circle cx="2.2" cy="13" r="1.6"/><path d="M3.6 2.8l6 4.8M3.8 7.6h6M3.6 12.2l6-4.6"/></g><rect x="10" y="6" width="12" height="3" fill="#e2ba80"/><path d="M22 7.5h2" stroke="#ddd" stroke-width="1"/><circle cx="17" cy="17" r="4.5" fill="none" stroke="#fff" stroke-width="3.4"/><path d="M17 10v14M10 17h14M12 12l10 10M22 12l-10 10" stroke="#fff" stroke-width="2.2"/><circle cx="17" cy="17" r="2.8" fill="#2b2b2b"/><rect x="15.6" y="15.6" width="2.8" height="2.8" fill="none" stroke="#fff" stroke-width="0.9"/></svg>
<svg class="a" style="left:7px;top:169px" width="24" height="24" viewBox="0 0 24 24"><g stroke="#fff" stroke-width="1.1" fill="none"><circle cx="2.2" cy="2" r="1.6"/><circle cx="2.2" cy="7.6" r="1.6"/><circle cx="2.2" cy="13" r="1.6"/><path d="M3.6 2.8l6 4.8M3.8 7.6h6M3.6 12.2l6-4.6"/></g><rect x="10" y="6" width="12" height="3" fill="#e2ba80"/><path d="M22 7.5h2" stroke="#ddd" stroke-width="1"/><circle cx="17" cy="17" r="7" fill="#14934a"/><path d="M12.5 17h9M17 12.5v9" stroke="#fff" stroke-width="2.6"/></svg>
<svg class="a" style="left:7px;top:200px" width="24" height="24" viewBox="0 0 24 24"><g stroke="#fff" stroke-width="1.1" fill="none"><circle cx="2.2" cy="2" r="1.6"/><circle cx="2.2" cy="7.6" r="1.6"/><circle cx="2.2" cy="13" r="1.6"/><path d="M3.6 2.8l6 4.8M3.8 7.6h6M3.6 12.2l6-4.6"/></g><rect x="10" y="6" width="12" height="3" fill="#e2ba80"/><path d="M22 7.5h2" stroke="#ddd" stroke-width="1"/><circle cx="17" cy="17" r="7" fill="#d3132a"/><path d="M14 14l6 6M20 14l-6 6" stroke="#fff" stroke-width="2.4"/></svg>
<svg class="a" style="left:7px;top:231px" width="24" height="24" viewBox="0 0 24 24"><g stroke="#fff" stroke-width="1.1" fill="none"><circle cx="2.2" cy="2" r="1.6"/><circle cx="2.2" cy="7.6" r="1.6"/><circle cx="2.2" cy="13" r="1.6"/><path d="M3.6 2.8l6 4.8M3.8 7.6h6M3.6 12.2l6-4.6"/></g><rect x="10" y="6" width="12" height="3" fill="#e2ba80"/><path d="M22 7.5h2" stroke="#ddd" stroke-width="1"/><circle cx="17" cy="17" r="7" fill="#e0852a"/><path d="M13.5 20.5l1-3 4.5-4.5 2 2-4.5 4.5z" fill="#333"/></svg>
<svg class="a" style="left:7px;top:262px" width="24" height="24" viewBox="0 0 24 24"><g stroke="#fff" stroke-width="1.1" fill="none"><circle cx="2.2" cy="2" r="1.6"/><circle cx="2.2" cy="7.6" r="1.6"/><circle cx="2.2" cy="13" r="1.6"/><path d="M3.6 2.8l6 4.8M3.8 7.6h6M3.6 12.2l6-4.6"/></g><rect x="10" y="6" width="12" height="3" fill="#e2ba80"/><path d="M22 7.5h2" stroke="#ddd" stroke-width="1"/><circle cx="17" cy="17" r="7" fill="#e0852a"/><path d="M17 13v4l-3 3M17 17l3 3" stroke="#333" stroke-width="1.3" fill="none"/></svg>
<svg class="a" style="left:7px;top:293px" width="24" height="24" viewBox="0 0 24 24"><g stroke="#fff" stroke-width="1.1" fill="none"><circle cx="2.2" cy="2" r="1.6"/><circle cx="2.2" cy="7.6" r="1.6"/><circle cx="2.2" cy="13" r="1.6"/><path d="M3.6 2.8l6 4.8M3.8 7.6h6M3.6 12.2l6-4.6"/></g><rect x="10" y="6" width="12" height="3" fill="#e2ba80"/><path d="M22 7.5h2" stroke="#ddd" stroke-width="1"/><circle cx="17" cy="17" r="7" fill="#e0852a"/><path d="M15 14.3h6M15 17h6M15 19.7h6" stroke="#4a3a2a" stroke-width="1.3"/><path d="M12.5 14.3h1.3M12.5 17h1.3M12.5 19.7h1.3" stroke="#4a3a2a" stroke-width="1.3"/></svg>
<svg class="a" style="left:7px;top:324px" width="24" height="24" viewBox="0 0 24 24"><g transform="rotate(-45 12 12)"><rect x="5" y="8.5" width="14" height="7" fill="none" stroke="#ddd" stroke-width="1.2"/><rect x="8" y="10" width="8" height="4" fill="#e0852a"/></g><g stroke="#fff" stroke-width="1" fill="none"><circle cx="2" cy="16" r="1.5"/><circle cx="2" cy="21" r="1.5"/><circle cx="6" cy="22" r="1.5"/><circle cx="22" cy="2.5" r="1.5"/><circle cx="17.5" cy="2" r="1.5"/><circle cx="22" cy="7" r="1.5"/><path d="M3.5 16.5l3 2M3.5 20.5l3-2M6.5 20.5v-2M18.5 3.5l-1 3M20.5 6.5l-3-.5M20.5 3l-3 3"/></g></svg>
<svg class="a" style="left:7px;top:355px" width="24" height="24" viewBox="0 0 24 24"><g stroke="#fff" stroke-width="1.1" fill="none"><circle cx="2.2" cy="2" r="1.6"/><circle cx="2.2" cy="7.6" r="1.6"/><circle cx="2.2" cy="13" r="1.6"/><path d="M3.6 2.8l6 4.8M3.8 7.6h6M3.6 12.2l6-4.6"/></g><rect x="10" y="6" width="12" height="3" fill="#e2ba80"/><path d="M22 7.5h2" stroke="#ddd" stroke-width="1"/><circle cx="17" cy="17" r="7" fill="#e0852a"/><rect x="12" y="14.2" width="10" height="5.6" rx="2.8" fill="#333"/><circle cx="15" cy="17" r="1.8" fill="#e0852a"/></svg>
<svg class="a" style="left:7px;top:386px" width="24" height="24" viewBox="0 0 24 24"><path d="M8 9L18 1" stroke="#e2ba80" stroke-width="3.2"/><path d="M18 1l2.5-1.5" stroke="#ddd" stroke-width="1"/><rect x="13" y="8" width="11" height="6" rx="3" fill="#e0852a"/><circle cx="16" cy="11" r="1.8" fill="#333"/><g stroke="#fff" stroke-width="0.9" fill="none"><path d="M1 11l7 0M1 14l7-3M2 17l6-6"/></g><path d="M8 15q0 4 5 4" stroke="#e0852a" stroke-width="1.8" fill="none"/><circle cx="19" cy="20" r="5" fill="#14934a" stroke="#fff" stroke-width="1"/><circle cx="19" cy="20" r="2.5" fill="none" stroke="#0b4f2a" stroke-width="1.2"/></svg>
<!-- TOOLBAR END -->
<!-- gray container -->
<div class="a" style="left:67px;top:123px;width:1495px;height:624px;background:#6b6b6b"></div>
<div class="a" style="left:39px;top:740px;width:1523px;height:80px;background:#6b6b6b"></div>
<!-- tabs -->
<div class="a" style="left:73px;top:127px;width:62px;height:26px;background:#8c8c8c;border-radius:3px 3px 0 0"></div>
<div class="t" style="left:78px;top:135px;color:#fff;font-size:11px">Start Page</div>
<div class="a" style="left:139px;top:127px;width:119px;height:26px;background:#fff;border-radius:3px 3px 0 0"></div>
<div class="t" style="left:144px;top:135px;color:#000;font-size:11.5px">lowpriceten20210803</div>
<!-- canvas -->
<svg class="a" style="left:73px;top:153px" width="1483" height="587" shape-rendering="crispEdges"><defs><pattern id="g0_0" x="3" y="1" width="4" height="4" patternUnits="userSpaceOnUse"><rect width="1" height="1" fill="#b3112a"/></pattern><pattern id="g0_1" x="3" y="158" width="4" height="4" patternUnits="userSpaceOnUse"><rect width="1" height="1" fill="#b3112a"/></pattern><pattern id="g0_2" x="3" y="315" width="4" height="4" patternUnits="userSpaceOnUse"><rect width="1" height="1" fill="#b3112a"/></pattern><pattern id="g0_3" x="3" y="480" width="4" height="4" patternUnits="userSpaceOnUse"><rect width="1" height="1" fill="#b3112a"/></pattern><pattern id="g1_0" x="120" y="1" width="4" height="4" patternUnits="userSpaceOnUse"><rect width="1" height="1" fill="#b3112a"/></pattern><pattern id="g1_1" x="120" y="158" width="4" height="4" patternUnits="userSpaceOnUse"><rect width="1" height="1" fill="#b3112a"/></pattern><pattern id="g1_2" x="120" y="315" width="4" height="4" patternUnits="userSpaceOnUse"><rect width="1" height="1" fill="#b3112a"/></pattern><pattern id="g1_3" x="120" y="480" width="4" height="4" patternUnits="userSpaceOnUse"><rect width="1" height="1" fill="#b3112a"/></pattern><pattern id="g2_0" x="281" y="1" width="4" height="4" patternUnits="userSpaceOnUse"><rect width="1" height="1" fill="#b3112a"/></pattern><pattern id="g2_1" x="281" y="158" width="4" height="4" patternUnits="userSpaceOnUse"><rect width="1" height="1" fill="#b3112a"/></pattern><pattern id="g2_2" x="281" y="315" width="4" height="4" patternUnits="userSpaceOnUse"><rect width="1" height="1" fill="#b3112a"/></pattern><pattern id="g2_3" x="281" y="480" width="4" height="4" patternUnits="userSpaceOnUse"><rect width="1" height="1" fill="#b3112a"/></pattern><pattern id="g3_0" x="442" y="1" width="4" height="4" patternUnits="userSpaceOnUse"><rect width="1" height="1" fill="#b3112a"/></pattern><pattern id="g3_1" x="442" y="158" width="4" height="4" patternUnits="userSpaceOnUse"><rect width="1" height="1" fill="#b3112a"/></pattern><pattern id="g3_2" x="442" y="315" width="4" height="4" patternUnits="userSpaceOnUse"><rect width="1" height="1" fill="#b3112a"/></pattern><pattern id="g3_3" x="442" y="480" width="4" height="4" patternUnits="userSpaceOnUse"><rect width="1" height="1" fill="#b3112a"/></pattern><pattern id="g4_0" x="603" y="1" width="4" height="4" patternUnits="userSpaceOnUse"><rect width="1" height="1" fill="#b3112a"/></pattern><pattern id="g4_1" x="603" y="158" width="4" height="4" patternUnits="userSpaceOnUse"><rect width="1" height="1" fill="#b3112a"/></pattern><pattern id="g4_2" x="603" y="315" width="4" height="4" patternUnits="userSpaceOnUse"><rect width="1" height="1" fill="#b3112a"/></pattern><pattern id="g4_3" x="603" y="480" width="4" height="4" patternUnits="userSpaceOnUse"><rect width="1" height="1" fill="#b3112a"/></pattern><pattern id="g5_0" x="764" y="1" width="4" height="4" patternUnits="userSpaceOnUse"><rect width="1" height="1" fill="#b3112a"/></pattern><pattern id="g5_1" x="764" y="158" width="4" height="4" patternUnits="userSpaceOnUse"><rect width="1" height="1" fill="#b3112a"/></pattern><pattern id="g5_2" x="764" y="315" width="4" height="4" patternUnits="userSpaceOnUse"><rect width="1" height="1" fill="#b3112a"/></pattern><pattern id="g5_3" x="764" y="480" width="4" height="4" patternUnits="userSpaceOnUse"><rect width="1" height="1" fill="#b3112a"/></pattern><pattern id="g6_0" x="925" y="1" width="4" height="4" patternUnits="userSpaceOnUse"><rect width="1" height="1" fill="#b3112a"/></pattern><pattern id="g6_1" x="925" y="158" width="4" height="4" patternUnits="userSpaceOnUse"><rect width="1" height="1" fill="#b3112a"/></pattern><pattern id="g6_2" x="925" y="315" width="4" height="4" patternUnits="userSpaceOnUse"><rect width="1" height="1" fill="#b3112a"/></pattern><pattern id="g6_3" x="925" y="480" width="4" height="4" patternUnits="userSpaceOnUse"><rect width="1" height="1" fill="#b3112a"/></pattern><pattern id="g7_0" x="1086" y="1" width="4" height="4" patternUnits="userSpaceOnUse"><rect width="1" height="1" fill="#b3112a"/></pattern><pattern id="g7_1" x="1086" y="158" width="4" height="4" patternUnits="userSpaceOnUse"><rect width="1" height="1" fill="#b3112a"/></pattern><pattern id="g7_2" x="1086" y="315" width="4" height="4" patternUnits="userSpaceOnUse"><rect width="1" height="1" fill="#b3112a"/></pattern><pattern id="g7_3" x="1086" y="480" width="4" height="4" patternUnits="userSpaceOnUse"><rect width="1" height="1" fill="#b3112a"/></pattern><pattern id="g8_0" x="1247" y="1" width="4" height="4" patternUnits="userSpaceOnUse"><rect width="1" height="1" fill="#b3112a"/></pattern><pattern id="g8_1" x="1247" y="158" width="4" height="4" patternUnits="userSpaceOnUse"><rect width="1" height="1" fill="#b3112a"/></pattern><pattern id="g8_2" x="1247" y="315" width="4" height="4" patternUnits="userSpaceOnUse"><rect width="1" height="1" fill="#b3112a"/></pattern><pattern id="g8_3" x="1247" y="480" width="4" height="4" patternUnits="userSpaceOnUse"><rect width="1" height="1" fill="#b3112a"/></pattern><pattern id="g9_0" x="1408" y="1" width="4" height="4" patternUnits="userSpaceOnUse"><rect width="1" height="1" fill="#b3112a"/></pattern><pattern id="g9_1" x="1408" y="158" width="4" height="4" patternUnits="userSpaceOnUse"><rect width="1" height="1" fill="#b3112a"/></pattern><pattern id="g9_2" x="1408" y="315" width="4" height="4" patternUnits="userSpaceOnUse"><rect width="1" height="1" fill="#b3112a"/></pattern><pattern id="g9_3" x="1408" y="480" width="4" height="4" patternUnits="userSpaceOnUse"><rect width="1" height="1" fill="#b3112a"/></pattern></defs><rect width="1483" height="587" fill="#000"/><rect x="3" y="1" width="113" height="153" fill="url(#g0_0)"/><rect x="3" y="158" width="113" height="153" fill="url(#g0_1)"/><rect x="3" y="315" width="113" height="161" fill="url(#g0_2)"/><rect x="3" y="480" width="113" height="105" fill="url(#g0_3)"/><rect x="120" y="1" width="157" height="153" fill="url(#g1_0)"/><rect x="120" y="158" width="157" height="153" fill="url(#g1_1)"/><rect x="120" y="315" width="157" height="161" fill="url(#g1_2)"/><rect x="120" y="480" width="157" height="105" fill="url(#g1_3)"/><rect x="281" y="1" width="157" height="153" fill="url(#g2_0)"/><rect x="281" y="158" width="157" height="153" fill="url(#g2_1)"/><rect x="281" y="315" width="157" height="161" fill="url(#g2_2)"/><rect x="281" y="480" width="157" height="105" fill="url(#g2_3)"/><rect x="442" y="1" width="157" height="153" fill="url(#g3_0)"/><rect x="442" y="158" width="157" height="153" fill="url(#g3_1)"/><rect x="442" y="315" width="157" height="161" fill="url(#g3_2)"/><rect x="442" y="480" width="157" height="105" fill="url(#g3_3)"/><rect x="603" y="1" width="157" height="153" fill="url(#g4_0)"/><rect x="603" y="158" width="157" height="153" fill="url(#g4_1)"/><rect x="603" y="315" width="157" height="161" fill="url(#g4_2)"/><rect x="603" y="480" width="157" height="105" fill="url(#g4_3)"/><rect x="764" y="1" width="157" height="153" fill="url(#g5_0)"/><rect x="764" y="158" width="157" height="153" fill="url(#g5_1)"/><rect x="764" y="315" width="157" height="161" fill="url(#g5_2)"/><rect x="764" y="480" width="157" height="105" fill="url(#g5_3)"/><rect x="925" y="1" width="157" height="153" fill="url(#g6_0)"/><rect x="925" y="158" width="157" height="153" fill="url(#g6_1)"/><rect x="925" y="315" width="157" height="161" fill="url(#g6_2)"/><rect x="925" y="480" width="157" height="105" fill="url(#g6_3)"/><rect x="1086" y="1" width="157" height="153" fill="url(#g7_0)"/><rect x="1086" y="158" width="157" height="153" fill="url(#g7_1)"/><rect x="1086" y="315" width="157" height="161" fill="url(#g7_2)"/><rect x="1086" y="480" width="157" height="105" fill="url(#g7_3)"/><rect x="1247" y="1" width="157" height="153" fill="url(#g8_0)"/><rect x="1247" y="158" width="157" height="153" fill="url(#g8_1)"/><rect x="1247" y="315" width="157" height="161" fill="url(#g8_2)"/><rect x="1247" y="480" width="157" height="105" fill="url(#g8_3)"/><rect x="1408" y="1" width="73" height="153" fill="url(#g9_0)"/><rect x="1408" y="158" width="73" height="153" fill="url(#g9_1)"/><rect x="1408" y="315" width="73" height="161" fill="url(#g9_2)"/><rect x="1408" y="480" width="73" height="105" fill="url(#g9_3)"/></svg>
<div class="a" style="left:604px;top:153px;width:1px;height:587px;background:#fff"></div>
<div class="a" style="left:73px;top:715px;width:1483px;height:1px;background:#fff"></div>

<!-- PCB START -->
<svg class="a" style="left:700px;top:190px" width="390" height="106" viewBox="0 0 390 106" shape-rendering="crispEdges"><path d="M1.5 106V15.5Q1.5 7.5 9.5 7.5H376.5Q384.5 7.5 384.5 15.5V106" stroke="#fff" stroke-width="1.2" fill="none"/><path d="M1.5 106V15.5Q1.5 7.5 9.5 7.5H376.5Q384.5 7.5 384.5 15.5V106" stroke="#ff2020" stroke-width="1.2" fill="none" stroke-dasharray="5 7"/><path d="M8.0 16.5 L15.0 16.5" stroke="#ffffff" stroke-width="1.0" fill="none"/><path d="M372.7 16.2 L379.0 16.2" stroke="#ffffff" stroke-width="1.0" fill="none"/><path d="M36.0 7.5 L98.3 7.5" stroke="#ffffff" stroke-width="1.0" fill="none"/><path d="M98.3 7.5 L98.3 19.3" stroke="#ffffff" stroke-width="1.0" fill="none"/><path d="M36.0 19.3 L98.3 19.3" stroke="#f5b21c" stroke-width="1.0" fill="none"/><path d="M36.0 7.5 L36.0 19.3" stroke="#f5b21c" stroke-width="1.0" fill="none"/><rect x="40.0" y="11.5" width="2.0" height="2.0" fill="#9a9a9a"/><rect x="43.8" y="11.5" width="2.0" height="2.0" fill="#9a9a9a"/><rect x="48.8" y="11.5" width="2.0" height="2.0" fill="#9a9a9a"/><rect x="53.7" y="11.5" width="2.0" height="2.0" fill="#9a9a9a"/><rect x="58.7" y="11.5" width="2.0" height="2.0" fill="#9a9a9a"/><rect x="63.7" y="11.5" width="2.0" height="2.0" fill="#9a9a9a"/><rect x="68.7" y="11.5" width="2.0" height="2.0" fill="#9a9a9a"/><rect x="73.6" y="11.5" width="2.0" height="2.0" fill="#9a9a9a"/><rect x="78.6" y="11.5" width="2.0" height="2.0" fill="#9a9a9a"/><rect x="83.6" y="11.5" width="2.0" height="2.0" fill="#9a9a9a"/><rect x="88.6" y="11.5" width="2.0" height="2.0" fill="#9a9a9a"/><rect x="93.5" y="11.5" width="2.0" height="2.0" fill="#9a9a9a"/><path d="M41.0 13.5 L41.0 21.0" stroke="#2020ff" stroke-width="1.0" fill="none"/><path d="M44.8 13.5 L44.8 21.0" stroke="#2020ff" stroke-width="1.0" fill="none"/><path d="M49.8 13.5 L49.8 21.0" stroke="#2020ff" stroke-width="1.0" fill="none"/><path d="M54.7 13.5 L54.7 21.0" stroke="#2020ff" stroke-width="1.0" fill="none"/><path d="M59.7 13.5 L59.7 21.0" stroke="#2020ff" stroke-width="1.0" fill="none"/><path d="M64.7 13.5 L64.7 21.0" stroke="#2020ff" stroke-width="1.0" fill="none"/><path d="M41.0 21.0 L41.0 38.6" stroke="#2020ff" stroke-width="1.0" fill="none"/><path d="M44.8 21.0 L44.8 38.6" stroke="#2020ff" stroke-width="1.0" fill="none"/><path d="M49.8 21.0 L49.8 30.0 L53.5 36.0 L53.5 38.6" stroke="#2020ff" stroke-width="1.0" fill="none"/><path d="M54.7 21.0 L54.7 30.0 L56.0 36.0 L56.0 38.6" stroke="#2020ff" stroke-width="1.0" fill="none"/><path d="M59.7 21.0 L59.7 30.0 L58.5 36.0 L58.5 38.6" stroke="#2020ff" stroke-width="1.0" fill="none"/><path d="M64.7 13.0 L64.7 38.6" stroke="#ff1a1a" stroke-width="1.2" fill="none"/><path d="M69.7 13.5 L69.7 21.0 L55.7 33.0 L47.7 34.0" stroke="#2020ff" stroke-width="1.0" fill="none"/><path d="M74.6 13.5 L74.6 21.0 L58.6 33.0 L50.6 34.0" stroke="#2020ff" stroke-width="1.0" fill="none"/><path d="M79.6 13.5 L79.6 21.0 L61.6 33.0 L53.6 34.0" stroke="#2020ff" stroke-width="1.0" fill="none"/><path d="M84.6 13.5 L84.6 21.0 L64.6 33.0 L56.6 34.0" stroke="#2020ff" stroke-width="1.0" fill="none"/><path d="M89.6 13.5 L89.6 21.0 L67.6 33.0 L59.6 34.0" stroke="#2020ff" stroke-width="1.0" fill="none"/><path d="M94.5 13.5 L94.5 21.0 L70.5 33.0 L62.5 34.0" stroke="#2020ff" stroke-width="1.0" fill="none"/><path d="M39.0 21.0 L43.0 26.0" stroke="#ffffff" stroke-width="1.0" fill="none"/><path d="M43.0 21.0 L39.0 26.0" stroke="#ffffff" stroke-width="1.0" fill="none"/><path d="M42.8 21.0 L46.8 26.0" stroke="#ffffff" stroke-width="1.0" fill="none"/><path d="M46.8 21.0 L42.8 26.0" stroke="#ffffff" stroke-width="1.0" fill="none"/><path d="M47.8 21.0 L51.8 26.0" stroke="#ffffff" stroke-width="1.0" fill="none"/><path d="M51.8 21.0 L47.8 26.0" stroke="#ffffff" stroke-width="1.0" fill="none"/><path d="M52.7 21.0 L56.7 26.0" stroke="#ffffff" stroke-width="1.0" fill="none"/><path d="M56.7 21.0 L52.7 26.0" stroke="#ffffff" stroke-width="1.0" fill="none"/><path d="M57.7 21.0 L61.7 26.0" stroke="#ffffff" stroke-width="1.0" fill="none"/><path d="M61.7 21.0 L57.7 26.0" stroke="#ffffff" stroke-width="1.0" fill="none"/><path d="M62.7 21.0 L66.7 26.0" stroke="#ffffff" stroke-width="1.0" fill="none"/><path d="M66.7 21.0 L62.7 26.0" stroke="#ffffff" stroke-width="1.0" fill="none"/><path d="M67.7 21.0 L71.7 26.0" stroke="#ffffff" stroke-width="1.0" fill="none"/><path d="M71.7 21.0 L67.7 26.0" stroke="#ffffff" stroke-width="1.0" fill="none"/><path d="M72.6 21.0 L76.6 26.0" stroke="#ffffff" stroke-width="1.0" fill="none"/><path d="M76.6 21.0 L72.6 26.0" stroke="#ffffff" stroke-width="1.0" fill="none"/><path d="M77.6 21.0 L81.6 26.0" stroke="#ffffff" stroke-width="1.0" fill="none"/><path d="M81.6 21.0 L77.6 26.0" stroke="#ffffff" stroke-width="1.0" fill="none"/><path d="M82.6 21.0 L86.6 26.0" stroke="#ffffff" stroke-width="1.0" fill="none"/><path d="M86.6 21.0 L82.6 26.0" stroke="#ffffff" stroke-width="1.0" fill="none"/><path d="M87.6 21.0 L91.6 26.0" stroke="#ffffff" stroke-width="1.0" fill="none"/><path d="M91.6 21.0 L87.6 26.0" stroke="#ffffff" stroke-width="1.0" fill="none"/><path d="M92.5 21.0 L96.5 26.0" stroke="#ffffff" stroke-width="1.0" fill="none"/><path d="M96.5 21.0 L92.5 26.0" stroke="#ffffff" stroke-width="1.0" fill="none"/><path d="M99.5 24.9 L74.6 42.3" stroke="#ffffff" stroke-width="1.0" fill="none"/><path d="M97.0 26.0 L72.0 44.0" stroke="#2020ff" stroke-width="1.0" fill="none"/><rect x="38.0" y="41.0" width="5.0" height="5.0" fill="#19d3e6"/><rect x="44.0" y="41.0" width="5.0" height="5.0" fill="#19d3e6"/><rect x="43.0" y="47.0" width="3.0" height="1.0" fill="#ffffff"/><rect x="39.0" y="46.0" width="1.0" height="1.0" fill="#19d3e6"/><rect x="43.0" y="42.0" width="1.0" height="3.0" fill="#19d3e6"/><rect x="50.0" y="52.0" width="1.0" height="3.0" fill="#19d3e6"/><rect x="37.0" y="46.0" width="1.0" height="1.0" fill="#ffffff"/><rect x="47.0" y="44.0" width="1.0" height="3.0" fill="#19d3e6"/><rect x="41.0" y="40.0" width="2.0" height="2.0" fill="#ffffff"/><rect x="50.0" y="52.0" width="2.0" height="1.0" fill="#ffffff"/><rect x="44.0" y="40.0" width="2.0" height="1.0" fill="#19d3e6"/><rect x="48.0" y="45.0" width="1.0" height="1.0" fill="#ffffff"/><rect x="40.0" y="51.0" width="3.0" height="2.0" fill="#ffffff"/><rect x="42.0" y="47.0" width="2.0" height="2.0" fill="#ffffff"/><rect x="38.0" y="44.0" width="1.0" height="1.0" fill="#ffffff"/><rect x="40.0" y="41.0" width="2.0" height="1.0" fill="#ffffff"/><rect x="46.0" y="42.0" width="3.0" height="1.0" fill="#19d3e6"/><rect x="42.0" y="45.0" width="1.0" height="1.0" fill="#ffffff"/><rect x="41.0" y="52.0" width="1.0" height="1.0" fill="#19d3e6"/><rect x="39.0" y="52.0" width="1.0" height="1.0" fill="#19d3e6"/><rect x="50.0" y="43.0" width="3.0" height="2.0" fill="#ffffff"/><rect x="48.0" y="45.0" width="3.0" height="1.0" fill="#ffffff"/><rect x="37.0" y="44.0" width="3.0" height="2.0" fill="#19d3e6"/><rect x="48.0" y="42.0" width="1.0" height="2.0" fill="#ffffff"/><rect x="49.0" y="50.0" width="1.0" height="3.0" fill="#ffffff"/><rect x="45.0" y="47.0" width="2.0" height="3.0" fill="#19d3e6"/><rect x="38.0" y="41.0" width="2.0" height="1.0" fill="#ffffff"/><rect x="47.0" y="45.0" width="2.0" height="2.0" fill="#ffffff"/><rect x="44.0" y="51.0" width="2.0" height="1.0" fill="#ffffff"/><rect x="41.0" y="51.0" width="1.0" height="2.0" fill="#ffffff"/><rect x="42.0" y="43.0" width="2.0" height="1.0" fill="#ffffff"/><rect x="38.0" y="42.0" width="1.0" height="3.0" fill="#ffffff"/><rect x="37.0" y="40.0" width="1.0" height="1.0" fill="#ffffff"/><rect x="45.0" y="41.0" width="2.0" height="1.0" fill="#ffffff"/><rect x="50.0" y="41.0" width="1.0" height="1.0" fill="#19d3e6"/><rect x="47.0" y="51.0" width="2.0" height="1.0" fill="#ffffff"/><rect x="48.0" y="45.0" width="1.0" height="3.0" fill="#ffffff"/><rect x="46.0" y="45.0" width="1.0" height="1.0" fill="#ffffff"/><rect x="45.0" y="52.0" width="2.0" height="3.0" fill="#ffffff"/><rect x="46.0" y="45.0" width="1.0" height="3.0" fill="#ffffff"/><rect x="47.0" y="40.0" width="1.0" height="1.0" fill="#19d3e6"/><rect x="49.0" y="41.0" width="2.0" height="2.0" fill="#19d3e6"/><rect x="49.0" y="44.0" width="1.0" height="3.0" fill="#ffffff"/><rect x="39.0" y="51.0" width="2.0" height="1.0" fill="#19d3e6"/><rect x="41.0" y="48.0" width="1.0" height="1.0" fill="#ffffff"/><rect x="42.0" y="47.0" width="1.0" height="2.0" fill="#ffffff"/><rect x="42.0" y="51.0" width="2.0" height="1.0" fill="#ffffff"/><path d="M51.0 41.0 L71.0 41.0" stroke="#ffffff" stroke-width="1.0" fill="none"/><path d="M71.0 41.0 L71.0 48.5" stroke="#ffffff" stroke-width="1.0" fill="none"/><path d="M51.0 48.5 L71.0 48.5" stroke="#f5b21c" stroke-width="1.0" fill="none"/><path d="M51.0 41.0 L51.0 48.5" stroke="#f5b21c" stroke-width="1.0" fill="none"/><rect x="55.0" y="44.0" width="2.0" height="2.0" fill="#9a9a9a"/><rect x="59.0" y="44.0" width="2.0" height="2.0" fill="#9a9a9a"/><rect x="63.0" y="44.0" width="2.0" height="2.0" fill="#9a9a9a"/><rect x="67.0" y="44.0" width="2.0" height="2.0" fill="#9a9a9a"/><path d="M74.6 42.0 L87.0 42.0" stroke="#f5b21c" stroke-width="1.0" fill="none"/><path d="M87.0 42.0 L87.0 48.5" stroke="#f5b21c" stroke-width="1.0" fill="none"/><path d="M74.6 48.5 L87.0 48.5" stroke="#f5b21c" stroke-width="1.0" fill="none"/><path d="M74.6 42.0 L74.6 48.5" stroke="#f5b21c" stroke-width="1.0" fill="none"/><rect x="51.0" y="70.0" width="2.0" height="3.0" fill="#ffffff"/><rect x="61.0" y="79.0" width="1.0" height="1.0" fill="#ff1a1a"/><rect x="55.0" y="76.0" width="2.0" height="3.0" fill="#ffffff"/><rect x="68.0" y="52.0" width="1.0" height="1.0" fill="#ffffff"/><rect x="68.0" y="62.0" width="1.0" height="2.0" fill="#ffffff"/><rect x="51.0" y="73.0" width="1.0" height="1.0" fill="#ffffff"/><rect x="69.0" y="61.0" width="1.0" height="1.0" fill="#ffffff"/><rect x="54.0" y="83.0" width="1.0" height="2.0" fill="#ff1a1a"/><rect x="70.0" y="80.0" width="3.0" height="2.0" fill="#ffffff"/><rect x="52.0" y="70.0" width="3.0" height="2.0" fill="#ffffff"/><rect x="60.0" y="78.0" width="3.0" height="1.0" fill="#ffffff"/><rect x="54.0" y="88.0" width="2.0" height="2.0" fill="#ffffff"/><rect x="71.0" y="86.0" width="1.0" height="2.0" fill="#ffffff"/><rect x="57.0" y="68.0" width="1.0" height="1.0" fill="#ffffff"/><rect x="69.0" y="54.0" width="2.0" height="1.0" fill="#ffffff"/><rect x="60.0" y="92.0" width="2.0" height="2.0" fill="#ff1a1a"/><rect x="63.0" y="79.0" width="3.0" height="2.0" fill="#ffffff"/><rect x="69.0" y="74.0" width="2.0" height="2.0" fill="#ffffff"/><rect x="65.0" y="90.0" width="1.0" height="2.0" fill="#ff1a1a"/><rect x="63.0" y="59.0" width="1.0" height="2.0" fill="#ff1a1a"/><rect x="49.0" y="91.0" width="1.0" height="2.0" fill="#ff1a1a"/><rect x="51.0" y="58.0" width="2.0" height="2.0" fill="#ff1a1a"/><rect x="55.0" y="71.0" width="2.0" height="2.0" fill="#ffffff"/><rect x="51.0" y="68.0" width="1.0" height="3.0" fill="#ffffff"/><rect x="68.0" y="52.0" width="1.0" height="2.0" fill="#ffffff"/><rect x="57.0" y="66.0" width="2.0" height="1.0" fill="#ff1a1a"/><rect x="70.0" y="77.0" width="2.0" height="1.0" fill="#ffffff"/><rect x="58.0" y="68.0" width="1.0" height="3.0" fill="#ff1a1a"/><rect x="62.0" y="60.0" width="1.0" height="1.0" fill="#ffffff"/><rect x="71.0" y="77.0" width="2.0" height="3.0" fill="#ffffff"/><rect x="56.0" y="89.0" width="1.0" height="1.0" fill="#ffffff"/><rect x="52.0" y="61.0" width="1.0" height="2.0" fill="#ffffff"/><rect x="69.0" y="68.0" width="3.0" height="1.0" fill="#ffffff"/><rect x="51.0" y="74.0" width="2.0" height="1.0" fill="#ffffff"/><rect x="66.0" y="77.0" width="1.0" height="1.0" fill="#ffffff"/><rect x="61.0" y="52.0" width="2.0" height="1.0" fill="#ff1a1a"/><rect x="53.0" y="56.0" width="2.0" height="3.0" fill="#ffffff"/><rect x="51.0" y="54.0" width="1.0" height="2.0" fill="#2020ff"/><rect x="58.0" y="68.0" width="3.0" height="2.0" fill="#ffffff"/><rect x="49.0" y="80.0" width="2.0" height="2.0" fill="#ffffff"/><rect x="67.0" y="68.0" width="1.0" height="3.0" fill="#ffffff"/><rect x="68.0" y="64.0" width="2.0" height="3.0" fill="#ffffff"/><rect x="63.0" y="72.0" width="2.0" height="2.0" fill="#ffffff"/><rect x="71.0" y="82.0" width="2.0" height="1.0" fill="#ffffff"/><rect x="71.0" y="87.0" width="1.0" height="2.0" fill="#ffffff"/><rect x="54.0" y="59.0" width="1.0" height="1.0" fill="#ffffff"/><rect x="71.0" y="92.0" width="2.0" height="2.0" fill="#ff1a1a"/><rect x="57.0" y="78.0" width="1.0" height="2.0" fill="#ff1a1a"/><rect x="61.0" y="71.0" width="2.0" height="3.0" fill="#ffffff"/><rect x="49.0" y="76.0" width="2.0" height="1.0" fill="#ffffff"/><rect x="67.0" y="78.0" width="2.0" height="2.0" fill="#ffffff"/><rect x="71.0" y="74.0" width="3.0" height="1.0" fill="#ff1a1a"/><rect x="64.0" y="84.0" width="1.0" height="2.0" fill="#ffffff"/><rect x="72.0" y="58.0" width="2.0" height="3.0" fill="#2020ff"/><rect x="64.0" y="53.0" width="3.0" height="2.0" fill="#2020ff"/><rect x="63.0" y="66.0" width="2.0" height="2.0" fill="#ffffff"/><rect x="65.0" y="82.0" width="1.0" height="1.0" fill="#ffffff"/><rect x="64.0" y="68.0" width="2.0" height="2.0" fill="#2020ff"/><rect x="50.0" y="92.0" width="1.0" height="2.0" fill="#ffffff"/><rect x="66.0" y="61.0" width="1.0" height="2.0" fill="#ffffff"/><rect x="52.0" y="90.0" width="1.0" height="1.0" fill="#ffffff"/><rect x="64.0" y="70.0" width="2.0" height="3.0" fill="#ffffff"/><rect x="52.0" y="66.0" width="2.0" height="3.0" fill="#ffffff"/><rect x="55.0" y="75.0" width="3.0" height="1.0" fill="#2020ff"/><rect x="72.0" y="81.0" width="3.0" height="2.0" fill="#ffffff"/><rect x="68.0" y="77.0" width="3.0" height="1.0" fill="#ffffff"/><rect x="64.0" y="82.0" width="1.0" height="3.0" fill="#ffffff"/><rect x="49.0" y="53.0" width="1.0" height="1.0" fill="#ffffff"/><rect x="51.0" y="73.0" width="1.0" height="3.0" fill="#ffffff"/><rect x="54.0" y="91.0" width="1.0" height="2.0" fill="#2020ff"/><rect x="57.0" y="82.0" width="2.0" height="3.0" fill="#ffffff"/><rect x="69.0" y="83.0" width="2.0" height="2.0" fill="#2020ff"/><rect x="69.0" y="66.0" width="3.0" height="1.0" fill="#ff1a1a"/><rect x="59.0" y="66.0" width="2.0" height="1.0" fill="#ffffff"/><rect x="62.0" y="69.0" width="3.0" height="2.0" fill="#ff1a1a"/><rect x="56.0" y="83.0" width="3.0" height="1.0" fill="#ffffff"/><rect x="66.0" y="71.0" width="1.0" height="1.0" fill="#ffffff"/><rect x="57.0" y="81.0" width="2.0" height="3.0" fill="#ffffff"/><rect x="59.0" y="75.0" width="2.0" height="2.0" fill="#ffffff"/><rect x="56.0" y="67.0" width="2.0" height="2.0" fill="#ff1a1a"/><rect x="49.0" y="79.0" width="1.0" height="2.0" fill="#ff1a1a"/><rect x="68.0" y="73.0" width="1.0" height="1.0" fill="#ff1a1a"/><rect x="67.0" y="87.0" width="1.0" height="3.0" fill="#ffffff"/><rect x="50.0" y="58.0" width="2.0" height="1.0" fill="#ffffff"/><rect x="63.0" y="64.0" width="1.0" height="2.0" fill="#ff1a1a"/><rect x="67.0" y="88.0" width="3.0" height="1.0" fill="#ffffff"/><rect x="51.0" y="84.0" width="1.0" height="2.0" fill="#2020ff"/><rect x="68.0" y="72.0" width="2.0" height="2.0" fill="#2020ff"/><rect x="65.0" y="71.0" width="1.0" height="3.0" fill="#ff1a1a"/><rect x="64.0" y="53.0" width="2.0" height="1.0" fill="#ffffff"/><rect x="71.0" y="90.0" width="1.0" height="1.0" fill="#ffffff"/><rect x="59.0" y="68.0" width="1.0" height="2.0" fill="#ffffff"/><rect x="66.0" y="64.0" width="2.0" height="2.0" fill="#2020ff"/><rect x="73.0" y="53.0" width="2.0" height="3.0" fill="#ffffff"/><rect x="52.0" y="89.0" width="1.0" height="3.0" fill="#ffffff"/><rect x="60.0" y="84.0" width="1.0" height="2.0" fill="#ffffff"/><rect x="54.0" y="61.0" width="1.0" height="2.0" fill="#2020ff"/><rect x="53.0" y="63.0" width="2.0" height="3.0" fill="#ffffff"/><rect x="62.0" y="85.0" width="2.0" height="2.0" fill="#2020ff"/><rect x="71.0" y="65.0" width="1.0" height="2.0" fill="#ff1a1a"/><rect x="70.0" y="67.0" width="2.0" height="3.0" fill="#ffffff"/><rect x="68.0" y="83.0" width="1.0" height="1.0" fill="#ffffff"/><rect x="70.0" y="88.0" width="2.0" height="3.0" fill="#2020ff"/><rect x="70.0" y="68.0" width="3.0" height="1.0" fill="#ffffff"/><rect x="64.0" y="92.0" width="1.0" height="1.0" fill="#ffffff"/><rect x="63.0" y="58.0" width="1.0" height="1.0" fill="#ffffff"/><rect x="51.0" y="62.0" width="2.0" height="2.0" fill="#ff1a1a"/><rect x="51.0" y="82.0" width="2.0" height="1.0" fill="#ff1a1a"/><rect x="68.0" y="68.0" width="2.0" height="1.0" fill="#ffffff"/><rect x="49.0" y="68.0" width="2.0" height="2.0" fill="#2020ff"/><rect x="56.0" y="54.0" width="1.0" height="2.0" fill="#ffffff"/><rect x="50.0" y="57.0" width="1.0" height="3.0" fill="#2020ff"/><rect x="60.0" y="86.0" width="3.0" height="1.0" fill="#2020ff"/><rect x="60.0" y="51.0" width="1.0" height="2.0" fill="#ffffff"/><rect x="64.0" y="89.0" width="2.0" height="3.0" fill="#ffffff"/><rect x="65.0" y="62.0" width="1.0" height="2.0" fill="#ffffff"/><rect x="56.0" y="62.0" width="2.0" height="2.0" fill="#2020ff"/><rect x="69.0" y="55.0" width="1.0" height="3.0" fill="#ffffff"/><rect x="64.0" y="58.0" width="2.0" height="1.0" fill="#ffffff"/><rect x="51.0" y="52.0" width="1.0" height="2.0" fill="#ffffff"/><rect x="71.0" y="69.0" width="1.0" height="1.0" fill="#ff1a1a"/><rect x="69.0" y="67.0" width="1.0" height="3.0" fill="#ffffff"/><rect x="58.0" y="80.0" width="1.0" height="2.0" fill="#ffffff"/><rect x="57.0" y="65.0" width="2.0" height="1.0" fill="#2020ff"/><rect x="61.0" y="83.0" width="1.0" height="2.0" fill="#ffffff"/><rect x="68.0" y="88.0" width="3.0" height="1.0" fill="#ff1a1a"/><rect x="63.0" y="59.0" width="1.0" height="3.0" fill="#ff1a1a"/><rect x="72.0" y="77.0" width="1.0" height="1.0" fill="#ffffff"/><rect x="60.0" y="68.0" width="2.0" height="2.0" fill="#ffffff"/><rect x="60.0" y="56.0" width="3.0" height="1.0" fill="#ffffff"/><rect x="62.0" y="62.0" width="1.0" height="1.0" fill="#ffffff"/><rect x="56.0" y="88.0" width="2.0" height="1.0" fill="#ffffff"/><rect x="53.0" y="73.0" width="2.0" height="1.0" fill="#ffffff"/><rect x="68.0" y="89.0" width="3.0" height="2.0" fill="#ffffff"/><rect x="64.0" y="77.0" width="2.0" height="2.0" fill="#ffffff"/><rect x="49.0" y="73.0" width="1.0" height="2.0" fill="#ffffff"/><rect x="61.0" y="62.0" width="1.0" height="3.0" fill="#ff1a1a"/><rect x="68.0" y="81.0" width="2.0" height="1.0" fill="#ffffff"/><rect x="60.0" y="68.0" width="2.0" height="2.0" fill="#ff1a1a"/><rect x="61.0" y="92.0" width="1.0" height="3.0" fill="#2020ff"/><rect x="51.0" y="89.0" width="2.0" height="2.0" fill="#ffffff"/><rect x="71.0" y="64.0" width="3.0" height="2.0" fill="#ffffff"/><rect x="67.0" y="75.0" width="1.0" height="1.0" fill="#ffffff"/><rect x="52.0" y="69.0" width="1.0" height="2.0" fill="#ff1a1a"/><rect x="66.0" y="73.0" width="2.0" height="1.0" fill="#ffffff"/><rect x="70.0" y="92.0" width="2.0" height="3.0" fill="#ffffff"/><rect x="69.0" y="60.0" width="1.0" height="1.0" fill="#2020ff"/><rect x="61.0" y="56.0" width="2.0" height="1.0" fill="#ff1a1a"/><rect x="56.0" y="81.0" width="1.0" height="2.0" fill="#ffffff"/><rect x="71.0" y="84.0" width="3.0" height="1.0" fill="#2020ff"/><path d="M52.0 61.0 L64.0 61.0" stroke="#2020ff" stroke-width="1.2" fill="none"/><path d="M56.0 77.0 L68.0 77.0" stroke="#2020ff" stroke-width="1.2" fill="none"/><path d="M44.0 55.0 L44.0 88.0 L54.0 100.0" stroke="#ff1a1a" stroke-width="1.2" fill="none"/><path d="M73.0 52.0 L73.0 88.0" stroke="#ff1a1a" stroke-width="1" fill="none"/><rect x="90.0" y="46.0" width="2.0" height="1.0" fill="#2020ff"/><rect x="96.0" y="62.0" width="1.0" height="2.0" fill="#2020ff"/><rect x="95.0" y="57.0" width="2.0" height="2.0" fill="#ffffff"/><rect x="90.0" y="56.0" width="1.0" height="1.0" fill="#ffffff"/><rect x="96.0" y="62.0" width="2.0" height="2.0" fill="#ffffff"/><rect x="95.0" y="57.0" width="2.0" height="2.0" fill="#ffffff"/><rect x="90.0" y="49.0" width="3.0" height="1.0" fill="#2020ff"/><rect x="92.0" y="57.0" width="2.0" height="3.0" fill="#2020ff"/><rect x="93.0" y="47.0" width="1.0" height="3.0" fill="#ffffff"/><rect x="91.0" y="47.0" width="1.0" height="2.0" fill="#ffffff"/><rect x="96.0" y="46.0" width="3.0" height="2.0" fill="#ffffff"/><rect x="93.0" y="52.0" width="1.0" height="1.0" fill="#ffffff"/><rect x="91.0" y="57.0" width="1.0" height="1.0" fill="#ffffff"/><rect x="94.0" y="61.0" width="2.0" height="1.0" fill="#2020ff"/><rect x="91.0" y="54.0" width="2.0" height="1.0" fill="#2020ff"/><rect x="93.0" y="54.0" width="1.0" height="1.0" fill="#ffffff"/><rect x="94.0" y="49.0" width="2.0" height="3.0" fill="#2020ff"/><rect x="95.0" y="49.0" width="2.0" height="2.0" fill="#2020ff"/><rect x="90.0" y="55.0" width="1.0" height="2.0" fill="#ffffff"/><rect x="91.0" y="45.0" width="2.0" height="3.0" fill="#2020ff"/><rect x="92.0" y="59.0" width="1.0" height="1.0" fill="#ffffff"/><rect x="94.0" y="46.0" width="2.0" height="2.0" fill="#2020ff"/><rect x="95.0" y="53.0" width="1.0" height="1.0" fill="#ffffff"/><rect x="93.0" y="56.0" width="2.0" height="2.0" fill="#2020ff"/><rect x="92.0" y="49.0" width="3.0" height="1.0" fill="#ffffff"/><path d="M93.0 45.0 L93.0 62.0" stroke="#2020ff" stroke-width="1.0" fill="none"/><path d="M73.4 52.3 L100.0 46.0" stroke="#19d3e6" stroke-width="0.9" fill="none"/><path d="M74.6 69.7 L100.0 64.7" stroke="#19d3e6" stroke-width="0.9" fill="none"/><path d="M78.4 73.4 L100.0 69.7" stroke="#19d3e6" stroke-width="0.9" fill="none"/><path d="M79.6 79.6 L100.0 77.0" stroke="#19d3e6" stroke-width="0.9" fill="none"/><path d="M80.8 91.0 L87.0 104.0" stroke="#19d3e6" stroke-width="0.9" fill="none"/><path d="M75.0 60.0 L90.0 57.0" stroke="#19d3e6" stroke-width="0.9" fill="none"/><path d="M21.0 82.0 L28.6 82.0" stroke="#f5b21c" stroke-width="1.0" fill="none"/><path d="M28.6 82.0 L28.6 101.0" stroke="#ffffff" stroke-width="1.0" fill="none"/><path d="M21.0 101.0 L28.6 101.0" stroke="#f5b21c" stroke-width="1.0" fill="none"/><path d="M21.0 82.0 L21.0 101.0" stroke="#f5b21c" stroke-width="1.0" fill="none"/><path d="M7.5 101.0 L21.0 91.0" stroke="#2020ff" stroke-width="1.0" fill="none"/><path d="M7.5 101.0 L21.0 93.8" stroke="#2020ff" stroke-width="1.0" fill="none"/><path d="M7.5 101.0 L21.0 96.6" stroke="#2020ff" stroke-width="1.0" fill="none"/><path d="M7.5 101.0 L21.0 99.4" stroke="#2020ff" stroke-width="1.0" fill="none"/><rect x="6.0" y="100.0" width="4.0" height="4.5" fill="#2020ff"/><path d="M31.0 91.0 L37.0 91.0" stroke="#2020ff" stroke-width="1.0" fill="none"/><path d="M31.0 93.5 L37.0 93.5" stroke="#2020ff" stroke-width="1.0" fill="none"/><path d="M31.0 96.0 L37.0 96.0" stroke="#2020ff" stroke-width="1.0" fill="none"/><path d="M31.0 98.5 L37.0 98.5" stroke="#2020ff" stroke-width="1.0" fill="none"/><rect x="38.0" y="96.0" width="2.0" height="1.0" fill="#ffffff"/><rect x="38.0" y="97.0" width="1.0" height="1.0" fill="#ffffff"/><rect x="41.0" y="99.0" width="1.0" height="1.0" fill="#ffffff"/><rect x="40.0" y="91.0" width="2.0" height="1.0" fill="#ffffff"/><rect x="37.0" y="95.0" width="1.0" height="2.0" fill="#ffffff"/><rect x="43.0" y="102.0" width="1.0" height="1.0" fill="#ffffff"/><rect x="40.0" y="93.0" width="2.0" height="1.0" fill="#ffffff"/><rect x="41.0" y="100.0" width="3.0" height="1.0" fill="#ffffff"/><rect x="43.0" y="92.0" width="1.0" height="2.0" fill="#ffffff"/><rect x="39.0" y="93.0" width="2.0" height="3.0" fill="#ffffff"/><rect x="40.0" y="102.0" width="2.0" height="1.0" fill="#ffffff"/><rect x="38.0" y="102.0" width="1.0" height="1.0" fill="#ffffff"/><rect x="37.0" y="94.0" width="2.0" height="2.0" fill="#ffffff"/><rect x="39.0" y="101.0" width="3.0" height="1.0" fill="#ffffff"/><rect x="40.0" y="92.0" width="2.0" height="2.0" fill="#ffffff"/><rect x="40.0" y="97.0" width="2.0" height="2.0" fill="#ffffff"/><rect x="42.0" y="99.0" width="2.0" height="3.0" fill="#ffffff"/><rect x="42.0" y="95.0" width="2.0" height="1.0" fill="#ffffff"/><rect x="38.0" y="95.0" width="1.0" height="2.0" fill="#ffffff"/><rect x="41.0" y="100.0" width="1.0" height="1.0" fill="#ffffff"/><rect x="41.0" y="94.0" width="2.0" height="1.0" fill="#ffffff"/><rect x="42.0" y="93.0" width="2.0" height="1.0" fill="#ffffff"/><rect x="40.0" y="102.0" width="2.0" height="1.0" fill="#ffffff"/><rect x="38.0" y="95.0" width="2.0" height="3.0" fill="#ffffff"/><rect x="42.0" y="97.0" width="1.0" height="2.0" fill="#ffffff"/><rect x="41.0" y="99.0" width="1.0" height="2.0" fill="#ffffff"/><rect x="38.0" y="102.0" width="2.0" height="2.0" fill="#ffffff"/><rect x="43.0" y="94.0" width="1.0" height="1.0" fill="#ffffff"/><rect x="37.0" y="94.0" width="2.0" height="3.0" fill="#ffffff"/><rect x="43.0" y="98.0" width="2.0" height="1.0" fill="#ffffff"/><rect x="41.0" y="102.0" width="2.0" height="3.0" fill="#ffffff"/><rect x="40.0" y="93.0" width="2.0" height="2.0" fill="#ffffff"/><rect x="37.0" y="91.0" width="2.0" height="2.0" fill="#ffffff"/><rect x="43.0" y="92.0" width="2.0" height="1.0" fill="#ffffff"/><rect x="39.0" y="90.0" width="3.0" height="2.0" fill="#ffffff"/><rect x="43.0" y="100.0" width="2.0" height="2.0" fill="#ffffff"/><rect x="39.0" y="101.0" width="1.0" height="3.0" fill="#ffffff"/><rect x="40.0" y="92.0" width="1.0" height="2.0" fill="#ffffff"/><rect x="41.0" y="96.0" width="2.0" height="2.0" fill="#ffffff"/><rect x="42.0" y="97.0" width="2.0" height="2.0" fill="#ffffff"/><path d="M44.8 88.0 L60.0 104.5" stroke="#ff1a1a" stroke-width="1" fill="none"/><path d="M46.8 88.0 L62.0 104.5" stroke="#ffffff" stroke-width="1" fill="none"/><path d="M48.8 88.0 L64.0 104.5" stroke="#ff1a1a" stroke-width="1" fill="none"/><path d="M50.8 88.0 L66.0 104.5" stroke="#ffffff" stroke-width="1" fill="none"/><path d="M52.8 88.0 L68.0 104.5" stroke="#ff1a1a" stroke-width="1" fill="none"/><path d="M54.8 88.0 L70.0 104.5" stroke="#ffffff" stroke-width="1" fill="none"/><path d="M55.0 91.0 L65.0 104.0" stroke="#ff1a1a" stroke-width="1.2" fill="none"/><path d="M100.0 7.5 L116.0 7.5" stroke="#ffffff" stroke-width="1.0" fill="none"/><path d="M116.0 7.5 L116.0 19.3" stroke="#ffffff" stroke-width="1.0" fill="none"/><path d="M100.0 19.3 L116.0 19.3" stroke="#ffffff" stroke-width="1.0" fill="none"/><path d="M100.0 7.5 L100.0 19.3" stroke="#ffffff" stroke-width="1.0" fill="none"/><rect x="103.0" y="10.8" width="2.0" height="2.0" fill="#9a9a9a"/><rect x="107.0" y="10.8" width="2.0" height="2.0" fill="#9a9a9a"/><rect x="111.0" y="10.8" width="2.0" height="2.0" fill="#9a9a9a"/><path d="M104.0 13.0 L104.0 20.0 L98.0 26.0 L95.0 29.0" stroke="#2020ff" stroke-width="1.0" fill="none"/><path d="M108.0 13.0 L108.0 21.0 L100.0 27.0" stroke="#2020ff" stroke-width="1.0" fill="none"/><path d="M116.0 8.0 L138.6 8.0" stroke="#f5b21c" stroke-width="1.0" fill="none"/><path d="M138.6 8.0 L138.6 20.5" stroke="#f5b21c" stroke-width="1.0" fill="none"/><path d="M116.0 20.5 L138.6 20.5" stroke="#f5b21c" stroke-width="1.0" fill="none"/><path d="M116.0 8.0 L116.0 20.5" stroke="#f5b21c" stroke-width="1.0" fill="none"/><rect x="117.2" y="11.0" width="3.0" height="3.0" fill="#19d3e6"/><rect x="117.2" y="16.0" width="3.0" height="3.0" fill="#19d3e6"/><rect x="124.0" y="11.5" width="2.0" height="2.0" fill="#9a9a9a"/><path d="M125.0 13.0 L125.0 38.6" stroke="#ffffff" stroke-width="1.2" fill="none"/><path d="M125.0 13.0 L125.0 38.6" stroke="#ff1a1a" stroke-width="1.2" fill="none" stroke-dasharray="3 3"/><rect x="127.6" y="11.5" width="2.0" height="2.0" fill="#9a9a9a"/><path d="M128.6 13.0 L128.6 38.6" stroke="#ffffff" stroke-width="1.2" fill="none"/><path d="M128.6 13.0 L128.6 38.6" stroke="#ff1a1a" stroke-width="1.2" fill="none" stroke-dasharray="3 3"/><rect x="133.2" y="11.5" width="2.0" height="2.0" fill="#9a9a9a"/><path d="M134.2 13.0 L134.2 38.6" stroke="#ffffff" stroke-width="1.2" fill="none"/><path d="M134.2 13.0 L134.2 38.6" stroke="#ff1a1a" stroke-width="1.2" fill="none" stroke-dasharray="3 3"/><path d="M138.6 10.0 L168.4 10.0" stroke="#ffffff" stroke-width="1" fill="none"/><path d="M138.6 10.0 L168.4 10.0" stroke="#ff1a1a" stroke-width="1" fill="none" stroke-dasharray="3 3"/><circle cx="171" cy="14.7" r="5.6" stroke="#fff" stroke-width="1" fill="none"/><path d="M176.6 14.7A5.6 5.6 0 0 1 171 20.3" stroke="#f5b21c" stroke-width="1" fill="none"/><rect x="170.2" y="13.9" width="1.6" height="1.6" fill="#9a9a9a"/><path d="M167.0 16.0 L143.5 37.3" stroke="#ffffff" stroke-width="1.0" fill="none"/><path d="M174.6 16.0 L152.0 37.3" stroke="#ff1a1a" stroke-width="1.0" fill="none"/><circle cx="185" cy="11.5" r="1.8" fill="#19d3e6"/><circle cx="190" cy="11.5" r="1.8" fill="#19d3e6"/><rect x="195.0" y="21.0" width="1.0" height="1.0" fill="#ffffff"/><rect x="197.0" y="17.0" width="2.0" height="1.0" fill="#ffffff"/><rect x="190.0" y="21.0" width="2.0" height="2.0" fill="#ffffff"/><rect x="193.0" y="21.0" width="3.0" height="2.0" fill="#ffffff"/><rect x="192.0" y="20.0" width="1.0" height="1.0" fill="#ffffff"/><rect x="194.0" y="18.0" width="2.0" height="1.0" fill="#ffffff"/><rect x="189.0" y="18.0" width="1.0" height="1.0" fill="#ffffff"/><rect x="193.0" y="20.0" width="2.0" height="2.0" fill="#ffffff"/><rect x="191.0" y="20.0" width="1.0" height="1.0" fill="#ffffff"/><rect x="190.0" y="22.0" width="2.0" height="1.0" fill="#ffffff"/><rect x="192.0" y="21.0" width="1.0" height="2.0" fill="#ffffff"/><rect x="192.0" y="21.0" width="3.0" height="2.0" fill="#ffffff"/><rect x="196.0" y="22.0" width="1.0" height="3.0" fill="#ffffff"/><rect x="191.0" y="21.0" width="1.0" height="2.0" fill="#ffffff"/><rect x="197.0" y="18.0" width="1.0" height="2.0" fill="#ffffff"/><rect x="194.0" y="16.0" width="1.0" height="1.0" fill="#ffffff"/><rect x="193.0" y="18.0" width="1.0" height="1.0" fill="#ffffff"/><rect x="188.0" y="20.0" width="2.0" height="2.0" fill="#ffffff"/><path d="M188.3 13.7 L188.3 40.0" stroke="#2020ff" stroke-width="1.2" fill="none"/><path d="M100.0 45.0 L107.5 37.3 L153.5 37.3 L157.0 40.0" stroke="#2020ff" stroke-width="1.2" fill="none"/><path d="M161.0 40.4 L200.0 40.4" stroke="#f5b21c" stroke-width="1.0" fill="none"/><path d="M161.0 40.4 L161.0 90.0" stroke="#f5b21c" stroke-width="1.0" fill="none"/><rect x="159.0" y="44.0" width="4.0" height="1.0" fill="#2020ff"/><rect x="159.0" y="46.0" width="4.0" height="1.0" fill="#2020ff"/><rect x="159.0" y="48.0" width="4.0" height="1.0" fill="#2020ff"/><rect x="159.0" y="50.0" width="4.0" height="1.0" fill="#2020ff"/><rect x="159.0" y="52.0" width="4.0" height="1.0" fill="#2020ff"/><rect x="159.0" y="54.0" width="4.0" height="1.0" fill="#2020ff"/><rect x="159.0" y="56.0" width="4.0" height="1.0" fill="#2020ff"/><rect x="159.0" y="58.0" width="4.0" height="1.0" fill="#2020ff"/><rect x="159.0" y="60.0" width="4.0" height="1.0" fill="#2020ff"/><rect x="159.0" y="62.0" width="4.0" height="1.0" fill="#2020ff"/><rect x="159.0" y="64.0" width="4.0" height="1.0" fill="#2020ff"/><rect x="159.0" y="66.0" width="4.0" height="1.0" fill="#2020ff"/><rect x="159.0" y="68.0" width="4.0" height="1.0" fill="#2020ff"/><rect x="159.0" y="70.0" width="4.0" height="1.0" fill="#2020ff"/><rect x="159.0" y="72.0" width="4.0" height="1.0" fill="#2020ff"/><rect x="159.0" y="74.0" width="4.0" height="1.0" fill="#2020ff"/><rect x="159.0" y="76.0" width="4.0" height="1.0" fill="#2020ff"/><rect x="159.0" y="78.0" width="4.0" height="1.0" fill="#2020ff"/><rect x="159.0" y="80.0" width="4.0" height="1.0" fill="#2020ff"/><rect x="159.0" y="82.0" width="4.0" height="1.0" fill="#2020ff"/><rect x="159.0" y="84.0" width="4.0" height="1.0" fill="#2020ff"/><rect x="159.0" y="86.0" width="4.0" height="1.0" fill="#2020ff"/><rect x="169.7" y="43.6" width="16.1" height="2.4" fill="#9a9a9a"/><path d="M167.0 46.0 L200.0 76.0" stroke="#ff1a1a" stroke-width="1" fill="none"/><path d="M168.6 46.0 L200.0 73.4" stroke="#ffffff" stroke-width="1" fill="none"/><path d="M170.2 46.0 L200.0 70.8" stroke="#ff1a1a" stroke-width="1" fill="none"/><path d="M171.8 46.0 L200.0 68.2" stroke="#ffffff" stroke-width="1" fill="none"/><path d="M173.4 46.0 L200.0 65.6" stroke="#ff1a1a" stroke-width="1" fill="none"/><path d="M175.0 46.0 L200.0 63.0" stroke="#ffffff" stroke-width="1" fill="none"/><path d="M176.6 46.0 L200.0 60.4" stroke="#ff1a1a" stroke-width="1" fill="none"/><path d="M178.2 46.0 L200.0 57.8" stroke="#ffffff" stroke-width="1" fill="none"/><rect x="140.0" y="75.0" width="2.0" height="2.0" fill="#2020ff"/><rect x="157.0" y="57.0" width="3.0" height="2.0" fill="#ffffff"/><rect x="144.0" y="82.0" width="2.0" height="3.0" fill="#ffffff"/><rect x="158.0" y="72.0" width="1.0" height="3.0" fill="#ffffff"/><rect x="140.0" y="42.0" width="3.0" height="2.0" fill="#19d3e6"/><rect x="139.0" y="60.0" width="2.0" height="1.0" fill="#ffffff"/><rect x="156.0" y="51.0" width="2.0" height="2.0" fill="#ffffff"/><rect x="145.0" y="63.0" width="2.0" height="2.0" fill="#ffffff"/><rect x="158.0" y="57.0" width="1.0" height="1.0" fill="#ffffff"/><rect x="145.0" y="72.0" width="2.0" height="3.0" fill="#19d3e6"/><rect x="153.0" y="55.0" width="3.0" height="2.0" fill="#19d3e6"/><rect x="152.0" y="51.0" width="1.0" height="1.0" fill="#ffffff"/><rect x="156.0" y="64.0" width="1.0" height="1.0" fill="#ffffff"/><rect x="141.0" y="55.0" width="2.0" height="1.0" fill="#2020ff"/><rect x="147.0" y="53.0" width="1.0" height="2.0" fill="#ffffff"/><rect x="139.0" y="66.0" width="1.0" height="2.0" fill="#19d3e6"/><rect x="147.0" y="71.0" width="1.0" height="3.0" fill="#ffffff"/><rect x="147.0" y="81.0" width="1.0" height="1.0" fill="#ffffff"/><rect x="155.0" y="69.0" width="3.0" height="2.0" fill="#ffffff"/><rect x="159.0" y="78.0" width="1.0" height="1.0" fill="#2020ff"/><rect x="158.0" y="70.0" width="2.0" height="2.0" fill="#2020ff"/><rect x="158.0" y="62.0" width="1.0" height="3.0" fill="#2020ff"/><rect x="160.0" y="63.0" width="3.0" height="1.0" fill="#2020ff"/><rect x="152.0" y="81.0" width="2.0" height="2.0" fill="#ffffff"/><rect x="155.0" y="53.0" width="2.0" height="1.0" fill="#2020ff"/><rect x="159.0" y="44.0" width="1.0" height="1.0" fill="#2020ff"/><rect x="158.0" y="75.0" width="1.0" height="1.0" fill="#19d3e6"/><rect x="159.0" y="71.0" width="2.0" height="2.0" fill="#19d3e6"/><rect x="142.0" y="39.0" width="2.0" height="1.0" fill="#2020ff"/><rect x="139.0" y="64.0" width="1.0" height="2.0" fill="#2020ff"/><rect x="158.0" y="74.0" width="1.0" height="2.0" fill="#ffffff"/><rect x="141.0" y="54.0" width="1.0" height="2.0" fill="#19d3e6"/><rect x="140.0" y="47.0" width="3.0" height="2.0" fill="#2020ff"/><rect x="160.0" y="42.0" width="2.0" height="3.0" fill="#ffffff"/><rect x="161.0" y="64.0" width="2.0" height="2.0" fill="#2020ff"/><rect x="158.0" y="82.0" width="1.0" height="1.0" fill="#ffffff"/><rect x="141.0" y="65.0" width="1.0" height="2.0" fill="#ffffff"/><rect x="161.0" y="67.0" width="1.0" height="1.0" fill="#19d3e6"/><rect x="154.0" y="72.0" width="2.0" height="1.0" fill="#19d3e6"/><rect x="141.0" y="68.0" width="3.0" height="2.0" fill="#2020ff"/><rect x="144.0" y="45.0" width="2.0" height="3.0" fill="#ffffff"/><rect x="155.0" y="49.0" width="2.0" height="1.0" fill="#ffffff"/><rect x="154.0" y="60.0" width="3.0" height="2.0" fill="#2020ff"/><rect x="152.0" y="59.0" width="2.0" height="2.0" fill="#ffffff"/><rect x="152.0" y="69.0" width="3.0" height="1.0" fill="#19d3e6"/><rect x="154.0" y="50.0" width="3.0" height="2.0" fill="#2020ff"/><rect x="147.0" y="51.0" width="1.0" height="3.0" fill="#ffffff"/><rect x="153.0" y="59.0" width="2.0" height="1.0" fill="#ffffff"/><rect x="146.0" y="72.0" width="1.0" height="3.0" fill="#19d3e6"/><rect x="153.0" y="60.0" width="3.0" height="2.0" fill="#19d3e6"/><rect x="149.0" y="69.0" width="1.0" height="2.0" fill="#ffffff"/><rect x="148.0" y="49.0" width="1.0" height="2.0" fill="#ffffff"/><rect x="153.0" y="75.0" width="1.0" height="2.0" fill="#ffffff"/><rect x="146.0" y="45.0" width="1.0" height="1.0" fill="#2020ff"/><rect x="141.0" y="68.0" width="2.0" height="1.0" fill="#19d3e6"/><rect x="148.0" y="46.0" width="1.0" height="1.0" fill="#19d3e6"/><rect x="146.0" y="63.0" width="1.0" height="2.0" fill="#ffffff"/><rect x="162.0" y="65.0" width="1.0" height="3.0" fill="#ffffff"/><rect x="139.0" y="62.0" width="1.0" height="1.0" fill="#19d3e6"/><rect x="152.0" y="60.0" width="1.0" height="3.0" fill="#ffffff"/><rect x="140.0" y="45.0" width="1.0" height="1.0" fill="#ffffff"/><rect x="161.0" y="63.0" width="1.0" height="2.0" fill="#2020ff"/><rect x="158.0" y="49.0" width="2.0" height="1.0" fill="#ffffff"/><rect x="144.0" y="67.0" width="2.0" height="1.0" fill="#2020ff"/><rect x="147.0" y="52.0" width="1.0" height="2.0" fill="#ffffff"/><rect x="145.0" y="61.0" width="1.0" height="2.0" fill="#ffffff"/><rect x="153.0" y="51.0" width="1.0" height="2.0" fill="#19d3e6"/><rect x="157.0" y="56.0" width="1.0" height="1.0" fill="#2020ff"/><rect x="145.0" y="63.0" width="2.0" height="2.0" fill="#ffffff"/><rect x="157.0" y="70.0" width="2.0" height="2.0" fill="#19d3e6"/><rect x="161.0" y="63.0" width="2.0" height="2.0" fill="#2020ff"/><rect x="152.0" y="43.0" width="2.0" height="3.0" fill="#19d3e6"/><rect x="154.0" y="77.0" width="1.0" height="2.0" fill="#ffffff"/><rect x="142.0" y="44.0" width="1.0" height="1.0" fill="#19d3e6"/><rect x="143.0" y="51.0" width="2.0" height="2.0" fill="#2020ff"/><rect x="139.0" y="65.0" width="1.0" height="2.0" fill="#ffffff"/><rect x="145.0" y="53.0" width="2.0" height="1.0" fill="#ffffff"/><rect x="162.0" y="61.0" width="1.0" height="2.0" fill="#2020ff"/><rect x="153.0" y="40.0" width="1.0" height="3.0" fill="#ffffff"/><rect x="149.0" y="54.0" width="1.0" height="2.0" fill="#ffffff"/><rect x="154.0" y="45.0" width="1.0" height="2.0" fill="#2020ff"/><rect x="145.0" y="72.0" width="2.0" height="3.0" fill="#ffffff"/><rect x="158.0" y="71.0" width="3.0" height="1.0" fill="#ffffff"/><rect x="160.0" y="48.0" width="1.0" height="1.0" fill="#2020ff"/><rect x="141.0" y="51.0" width="2.0" height="2.0" fill="#2020ff"/><rect x="142.0" y="71.0" width="3.0" height="2.0" fill="#2020ff"/><rect x="150.0" y="61.0" width="2.0" height="1.0" fill="#ffffff"/><rect x="137.0" y="76.0" width="3.0" height="2.0" fill="#19d3e6"/><rect x="148.0" y="66.0" width="3.0" height="1.0" fill="#2020ff"/><rect x="149.0" y="84.0" width="2.0" height="1.0" fill="#19d3e6"/><rect x="153.0" y="55.0" width="2.0" height="1.0" fill="#2020ff"/><rect x="157.0" y="50.0" width="2.0" height="3.0" fill="#ffffff"/><rect x="139.0" y="47.0" width="2.0" height="2.0" fill="#2020ff"/><rect x="149.0" y="49.0" width="1.0" height="1.0" fill="#ffffff"/><rect x="162.0" y="55.0" width="2.0" height="2.0" fill="#ffffff"/><rect x="141.0" y="82.0" width="1.0" height="1.0" fill="#19d3e6"/><rect x="157.0" y="49.0" width="2.0" height="1.0" fill="#ffffff"/><rect x="141.0" y="47.0" width="2.0" height="3.0" fill="#ffffff"/><rect x="145.0" y="44.0" width="2.0" height="1.0" fill="#19d3e6"/><rect x="143.0" y="40.0" width="2.0" height="2.0" fill="#19d3e6"/><rect x="151.0" y="51.0" width="2.0" height="2.0" fill="#ffffff"/><rect x="161.0" y="46.0" width="3.0" height="1.0" fill="#2020ff"/><rect x="152.0" y="64.0" width="2.0" height="2.0" fill="#ffffff"/><rect x="138.0" y="82.0" width="1.0" height="2.0" fill="#19d3e6"/><rect x="148.0" y="56.0" width="2.0" height="3.0" fill="#ffffff"/><rect x="155.0" y="79.0" width="1.0" height="3.0" fill="#ffffff"/><rect x="161.0" y="69.0" width="1.0" height="1.0" fill="#ffffff"/><rect x="160.0" y="83.0" width="2.0" height="2.0" fill="#ffffff"/><rect x="159.0" y="41.0" width="2.0" height="1.0" fill="#ffffff"/><rect x="162.0" y="70.0" width="3.0" height="1.0" fill="#ffffff"/><rect x="139.0" y="71.0" width="1.0" height="2.0" fill="#2020ff"/><rect x="140.0" y="47.0" width="3.0" height="1.0" fill="#2020ff"/><rect x="140.0" y="52.0" width="2.0" height="1.0" fill="#19d3e6"/><rect x="161.0" y="82.0" width="1.0" height="3.0" fill="#ffffff"/><rect x="149.0" y="66.0" width="1.0" height="3.0" fill="#19d3e6"/><rect x="141.0" y="81.0" width="2.0" height="1.0" fill="#ffffff"/><rect x="147.0" y="45.0" width="1.0" height="1.0" fill="#ffffff"/><rect x="146.0" y="83.0" width="1.0" height="2.0" fill="#ffffff"/><rect x="146.0" y="49.0" width="1.0" height="2.0" fill="#2020ff"/><rect x="138.0" y="56.0" width="2.0" height="2.0" fill="#19d3e6"/><rect x="153.0" y="81.0" width="1.0" height="1.0" fill="#2020ff"/><rect x="143.0" y="61.0" width="3.0" height="2.0" fill="#19d3e6"/><rect x="152.0" y="65.0" width="1.0" height="1.0" fill="#ffffff"/><rect x="145.0" y="54.0" width="1.0" height="3.0" fill="#ffffff"/><rect x="139.0" y="70.0" width="1.0" height="2.0" fill="#ffffff"/><rect x="151.0" y="45.0" width="1.0" height="2.0" fill="#19d3e6"/><rect x="162.0" y="58.0" width="1.0" height="2.0" fill="#ffffff"/><rect x="160.0" y="64.0" width="1.0" height="1.0" fill="#ffffff"/><rect x="149.0" y="56.0" width="1.0" height="1.0" fill="#ffffff"/><rect x="139.0" y="46.0" width="2.0" height="2.0" fill="#2020ff"/><rect x="140.0" y="45.0" width="1.0" height="1.0" fill="#19d3e6"/><rect x="140.0" y="70.0" width="3.0" height="1.0" fill="#2020ff"/><rect x="160.0" y="45.0" width="2.0" height="3.0" fill="#ffffff"/><rect x="138.0" y="53.0" width="2.0" height="3.0" fill="#ffffff"/><rect x="150.0" y="76.0" width="2.0" height="1.0" fill="#2020ff"/><rect x="139.0" y="49.0" width="1.0" height="1.0" fill="#ffffff"/><rect x="161.0" y="68.0" width="3.0" height="2.0" fill="#ffffff"/><rect x="146.0" y="84.0" width="1.0" height="1.0" fill="#2020ff"/><rect x="161.0" y="84.0" width="3.0" height="2.0" fill="#ffffff"/><rect x="151.0" y="52.0" width="3.0" height="1.0" fill="#ffffff"/><rect x="161.0" y="40.0" width="2.0" height="3.0" fill="#2020ff"/><rect x="153.0" y="60.0" width="1.0" height="2.0" fill="#ffffff"/><rect x="161.0" y="54.0" width="2.0" height="3.0" fill="#19d3e6"/><rect x="156.0" y="46.0" width="2.0" height="2.0" fill="#ffffff"/><rect x="151.0" y="60.0" width="2.0" height="1.0" fill="#19d3e6"/><rect x="154.0" y="67.0" width="3.0" height="2.0" fill="#ffffff"/><rect x="156.0" y="82.0" width="3.0" height="2.0" fill="#19d3e6"/><rect x="141.0" y="82.0" width="1.0" height="2.0" fill="#19d3e6"/><rect x="149.0" y="44.0" width="2.0" height="2.0" fill="#2020ff"/><rect x="144.0" y="65.0" width="2.0" height="2.0" fill="#2020ff"/><rect x="153.0" y="41.0" width="2.0" height="3.0" fill="#ffffff"/><rect x="148.0" y="42.0" width="2.0" height="1.0" fill="#ffffff"/><rect x="143.0" y="80.0" width="3.0" height="1.0" fill="#ffffff"/><rect x="161.0" y="61.0" width="2.0" height="2.0" fill="#2020ff"/><rect x="160.0" y="68.0" width="1.0" height="3.0" fill="#2020ff"/><rect x="143.0" y="72.0" width="1.0" height="1.0" fill="#19d3e6"/><rect x="157.0" y="53.0" width="1.0" height="2.0" fill="#ffffff"/><rect x="149.0" y="68.0" width="1.0" height="3.0" fill="#2020ff"/><rect x="141.0" y="51.0" width="2.0" height="2.0" fill="#19d3e6"/><rect x="142.0" y="71.0" width="1.0" height="3.0" fill="#19d3e6"/><rect x="121.0" y="43.0" width="1.0" height="3.0" fill="#ffffff"/><rect x="112.0" y="48.0" width="3.0" height="2.0" fill="#ffffff"/><rect x="108.0" y="53.0" width="1.0" height="1.0" fill="#ffffff"/><rect x="120.0" y="52.0" width="2.0" height="2.0" fill="#2020ff"/><rect x="116.0" y="51.0" width="1.0" height="2.0" fill="#ffffff"/><rect x="114.0" y="43.0" width="3.0" height="2.0" fill="#ffffff"/><rect x="125.0" y="52.0" width="1.0" height="2.0" fill="#ffffff"/><rect x="109.0" y="43.0" width="2.0" height="3.0" fill="#2020ff"/><rect x="117.0" y="46.0" width="2.0" height="2.0" fill="#2020ff"/><rect x="115.0" y="46.0" width="3.0" height="2.0" fill="#ffffff"/><rect x="111.0" y="54.0" width="1.0" height="1.0" fill="#ffffff"/><rect x="115.0" y="48.0" width="2.0" height="3.0" fill="#ffffff"/><rect x="118.0" y="55.0" width="1.0" height="1.0" fill="#2020ff"/><rect x="119.0" y="44.0" width="2.0" height="2.0" fill="#ffffff"/><rect x="122.0" y="50.0" width="1.0" height="2.0" fill="#2020ff"/><rect x="126.0" y="54.0" width="1.0" height="3.0" fill="#ffffff"/><rect x="109.0" y="46.0" width="1.0" height="2.0" fill="#2020ff"/><rect x="117.0" y="52.0" width="3.0" height="1.0" fill="#ffffff"/><rect x="120.0" y="50.0" width="3.0" height="1.0" fill="#ffffff"/><rect x="112.0" y="49.0" width="1.0" height="2.0" fill="#ffffff"/><rect x="121.0" y="50.0" width="2.0" height="3.0" fill="#ffffff"/><rect x="124.0" y="54.0" width="2.0" height="1.0" fill="#2020ff"/><rect x="112.0" y="53.0" width="2.0" height="1.0" fill="#2020ff"/><rect x="112.0" y="52.0" width="1.0" height="2.0" fill="#2020ff"/><rect x="120.0" y="45.0" width="3.0" height="1.0" fill="#ffffff"/><rect x="115.0" y="46.0" width="2.0" height="2.0" fill="#ffffff"/><rect x="120.0" y="51.0" width="2.0" height="3.0" fill="#2020ff"/><rect x="109.0" y="45.0" width="2.0" height="2.0" fill="#ffffff"/><rect x="111.0" y="46.0" width="2.0" height="3.0" fill="#2020ff"/><rect x="121.0" y="42.0" width="2.0" height="2.0" fill="#ffffff"/><rect x="109.0" y="47.0" width="1.0" height="2.0" fill="#ffffff"/><rect x="109.0" y="50.0" width="2.0" height="1.0" fill="#ffffff"/><rect x="118.0" y="51.0" width="2.0" height="2.0" fill="#ffffff"/><rect x="112.0" y="51.0" width="1.0" height="1.0" fill="#ffffff"/><rect x="121.0" y="50.0" width="1.0" height="2.0" fill="#2020ff"/><rect x="122.0" y="46.0" width="3.0" height="2.0" fill="#ffffff"/><rect x="120.0" y="46.0" width="1.0" height="3.0" fill="#ffffff"/><rect x="108.0" y="48.0" width="1.0" height="2.0" fill="#2020ff"/><rect x="114.0" y="52.0" width="3.0" height="1.0" fill="#ffffff"/><rect x="120.0" y="53.0" width="1.0" height="2.0" fill="#ffffff"/><path d="M107.5 42.0 L126.0 42.0" stroke="#2020ff" stroke-width="1.0" fill="none"/><path d="M107.5 55.0 L126.0 55.0" stroke="#2020ff" stroke-width="1.0" fill="none"/><path d="M103.7 55.0 L132.3 55.0" stroke="#ffffff" stroke-width="1.0" fill="none"/><path d="M132.3 55.0 L132.3 89.6" stroke="#f5b21c" stroke-width="1.0" fill="none"/><path d="M103.7 89.6 L132.3 89.6" stroke="#f5b21c" stroke-width="1.0" fill="none"/><path d="M103.7 55.0 L103.7 89.6" stroke="#f5b21c" stroke-width="1.0" fill="none"/><path d="M111.0 57.0 L111.0 80.0 L121.0 92.0" stroke="#ffffff" stroke-width="1.2" fill="none"/><path d="M111.0 57.0 L111.0 80.0 L121.0 92.0" stroke="#ff1a1a" stroke-width="1.2" fill="none" stroke-dasharray="3 3"/><path d="M117.4 57.0 L117.4 80.0 L127.4 92.0" stroke="#ffffff" stroke-width="1.2" fill="none"/><path d="M117.4 57.0 L117.4 80.0 L127.4 92.0" stroke="#ff1a1a" stroke-width="1.2" fill="none" stroke-dasharray="3 3"/><path d="M122.4 57.0 L122.4 80.0 L132.4 92.0" stroke="#ffffff" stroke-width="1.2" fill="none"/><path d="M122.4 57.0 L122.4 80.0 L132.4 92.0" stroke="#ff1a1a" stroke-width="1.2" fill="none" stroke-dasharray="3 3"/><path d="M100.0 56.0 L200.0 42.0" stroke="#19d3e6" stroke-width="0.9" fill="none"/><path d="M100.0 63.0 L200.0 58.0" stroke="#19d3e6" stroke-width="0.9" fill="none"/><path d="M100.0 70.0 L200.0 62.0" stroke="#19d3e6" stroke-width="0.9" fill="none"/><path d="M104.0 88.0 L200.0 70.0" stroke="#19d3e6" stroke-width="0.9" fill="none"/><path d="M120.0 104.0 L200.0 78.0" stroke="#19d3e6" stroke-width="0.9" fill="none"/><path d="M130.0 104.0 L200.0 83.0" stroke="#19d3e6" stroke-width="0.9" fill="none"/><path d="M130.0 94.0 L175.0 94.0" stroke="#ffffff" stroke-width="1.2" fill="none"/><path d="M130.0 94.0 L175.0 94.0" stroke="#ff1a1a" stroke-width="1.2" fill="none" stroke-dasharray="3 3"/><path d="M130.0 97.0 L175.0 97.0" stroke="#ffffff" stroke-width="1.2" fill="none"/><path d="M130.0 97.0 L175.0 97.0" stroke="#ff1a1a" stroke-width="1.2" fill="none" stroke-dasharray="3 3"/><path d="M130.0 100.0 L175.0 100.0" stroke="#ffffff" stroke-width="1" fill="none"/><rect x="187.0" y="96.0" width="3.0" height="2.0" fill="#19d3e6"/><rect x="173.0" y="92.0" width="1.0" height="1.0" fill="#19d3e6"/><rect x="172.0" y="88.0" width="2.0" height="1.0" fill="#ffffff"/><rect x="184.0" y="99.0" width="2.0" height="2.0" fill="#ffffff"/><rect x="175.0" y="99.0" width="1.0" height="2.0" fill="#2020ff"/><rect x="190.0" y="87.0" width="3.0" height="2.0" fill="#19d3e6"/><rect x="175.0" y="90.0" width="3.0" height="2.0" fill="#19d3e6"/><rect x="193.0" y="102.0" width="1.0" height="2.0" fill="#ffffff"/><rect x="179.0" y="99.0" width="2.0" height="1.0" fill="#ffffff"/><rect x="183.0" y="87.0" width="1.0" height="3.0" fill="#ff1a1a"/><rect x="192.0" y="100.0" width="1.0" height="1.0" fill="#19d3e6"/><rect x="178.0" y="97.0" width="2.0" height="1.0" fill="#ff1a1a"/><rect x="193.0" y="94.0" width="2.0" height="1.0" fill="#19d3e6"/><rect x="189.0" y="99.0" width="2.0" height="1.0" fill="#2020ff"/><rect x="186.0" y="93.0" width="2.0" height="2.0" fill="#2020ff"/><rect x="176.0" y="86.0" width="1.0" height="2.0" fill="#2020ff"/><rect x="174.0" y="89.0" width="3.0" height="1.0" fill="#ffffff"/><rect x="178.0" y="102.0" width="2.0" height="3.0" fill="#19d3e6"/><rect x="191.0" y="91.0" width="2.0" height="2.0" fill="#ff1a1a"/><rect x="182.0" y="97.0" width="2.0" height="2.0" fill="#ffffff"/><rect x="181.0" y="98.0" width="2.0" height="3.0" fill="#ffffff"/><rect x="174.0" y="102.0" width="2.0" height="3.0" fill="#19d3e6"/><rect x="198.0" y="88.0" width="1.0" height="1.0" fill="#19d3e6"/><rect x="172.0" y="96.0" width="2.0" height="1.0" fill="#2020ff"/><rect x="196.0" y="96.0" width="1.0" height="1.0" fill="#ffffff"/><rect x="196.0" y="101.0" width="2.0" height="1.0" fill="#ffffff"/><rect x="187.0" y="89.0" width="1.0" height="3.0" fill="#ff1a1a"/><rect x="184.0" y="103.0" width="1.0" height="1.0" fill="#19d3e6"/><rect x="175.0" y="98.0" width="1.0" height="2.0" fill="#ffffff"/><rect x="179.0" y="104.0" width="1.0" height="2.0" fill="#19d3e6"/><rect x="174.0" y="101.0" width="1.0" height="2.0" fill="#ffffff"/><rect x="169.0" y="101.0" width="1.0" height="3.0" fill="#ffffff"/><rect x="173.0" y="95.0" width="1.0" height="2.0" fill="#2020ff"/><rect x="188.0" y="97.0" width="2.0" height="2.0" fill="#ffffff"/><rect x="196.0" y="98.0" width="1.0" height="2.0" fill="#ff1a1a"/><rect x="184.0" y="104.0" width="2.0" height="1.0" fill="#ffffff"/><rect x="190.0" y="87.0" width="2.0" height="2.0" fill="#ffffff"/><rect x="198.0" y="98.0" width="2.0" height="3.0" fill="#ffffff"/><rect x="178.0" y="86.0" width="2.0" height="1.0" fill="#ff1a1a"/><rect x="185.0" y="87.0" width="3.0" height="2.0" fill="#ffffff"/><rect x="186.0" y="93.0" width="1.0" height="1.0" fill="#19d3e6"/><rect x="184.0" y="95.0" width="2.0" height="1.0" fill="#19d3e6"/><rect x="184.0" y="87.0" width="1.0" height="1.0" fill="#19d3e6"/><rect x="174.0" y="95.0" width="1.0" height="2.0" fill="#ff1a1a"/><rect x="191.0" y="87.0" width="1.0" height="1.0" fill="#ffffff"/><rect x="197.0" y="90.0" width="3.0" height="1.0" fill="#ff1a1a"/><rect x="172.0" y="92.0" width="1.0" height="2.0" fill="#ffffff"/><rect x="174.0" y="94.0" width="3.0" height="1.0" fill="#ff1a1a"/><rect x="170.0" y="101.0" width="2.0" height="1.0" fill="#ff1a1a"/><rect x="180.0" y="95.0" width="1.0" height="1.0" fill="#ffffff"/><rect x="194.0" y="103.0" width="2.0" height="2.0" fill="#ff1a1a"/><rect x="185.0" y="103.0" width="3.0" height="2.0" fill="#ffffff"/><rect x="198.0" y="88.0" width="2.0" height="2.0" fill="#ffffff"/><rect x="176.0" y="104.0" width="1.0" height="3.0" fill="#ffffff"/><rect x="181.0" y="102.0" width="1.0" height="2.0" fill="#2020ff"/><rect x="196.0" y="93.0" width="2.0" height="1.0" fill="#19d3e6"/><rect x="195.0" y="98.0" width="2.0" height="2.0" fill="#19d3e6"/><rect x="186.0" y="88.0" width="3.0" height="2.0" fill="#ffffff"/><rect x="175.0" y="104.0" width="2.0" height="1.0" fill="#ff1a1a"/><rect x="176.0" y="93.0" width="2.0" height="1.0" fill="#19d3e6"/><rect x="180.0" y="97.0" width="3.0" height="1.0" fill="#ffffff"/><rect x="188.0" y="98.0" width="1.0" height="1.0" fill="#ff1a1a"/><rect x="182.0" y="103.0" width="2.0" height="2.0" fill="#ff1a1a"/><rect x="198.0" y="94.0" width="1.0" height="2.0" fill="#2020ff"/><rect x="191.0" y="100.0" width="1.0" height="3.0" fill="#19d3e6"/><rect x="199.0" y="90.0" width="1.0" height="2.0" fill="#19d3e6"/><rect x="181.0" y="89.0" width="2.0" height="3.0" fill="#ffffff"/><rect x="170.0" y="88.0" width="3.0" height="2.0" fill="#ffffff"/><rect x="190.0" y="96.0" width="1.0" height="3.0" fill="#2020ff"/><rect x="189.0" y="95.0" width="1.0" height="1.0" fill="#ffffff"/><rect x="173.0" y="92.0" width="2.0" height="1.0" fill="#ffffff"/><rect x="180.0" y="98.0" width="1.0" height="1.0" fill="#2020ff"/><rect x="190.0" y="104.0" width="2.0" height="2.0" fill="#2020ff"/><rect x="183.0" y="86.0" width="2.0" height="3.0" fill="#ff1a1a"/><rect x="197.0" y="89.0" width="1.0" height="2.0" fill="#2020ff"/><rect x="187.0" y="99.0" width="3.0" height="2.0" fill="#2020ff"/><rect x="194.0" y="93.0" width="2.0" height="2.0" fill="#ff1a1a"/><rect x="171.0" y="88.0" width="1.0" height="2.0" fill="#ff1a1a"/><rect x="173.0" y="94.0" width="1.0" height="2.0" fill="#19d3e6"/><rect x="189.0" y="92.0" width="1.0" height="3.0" fill="#ff1a1a"/><rect x="168.0" y="102.0" width="1.0" height="1.0" fill="#ff1a1a"/><rect x="172.0" y="102.0" width="1.0" height="1.0" fill="#ffffff"/><rect x="179.0" y="89.0" width="1.0" height="2.0" fill="#ffffff"/><rect x="191.0" y="94.0" width="1.0" height="2.0" fill="#ffffff"/><rect x="183.0" y="103.0" width="1.0" height="2.0" fill="#ffffff"/><rect x="184.0" y="92.0" width="3.0" height="1.0" fill="#ff1a1a"/><rect x="181.0" y="89.0" width="2.0" height="1.0" fill="#ff1a1a"/><rect x="191.0" y="103.0" width="1.0" height="1.0" fill="#ffffff"/><rect x="195.0" y="96.0" width="1.0" height="1.0" fill="#19d3e6"/><rect x="186.0" y="92.0" width="2.0" height="1.0" fill="#ffffff"/><rect x="179.0" y="94.0" width="1.0" height="1.0" fill="#ffffff"/><rect x="175.0" y="91.0" width="3.0" height="2.0" fill="#ff1a1a"/><rect x="180.0" y="93.0" width="3.0" height="1.0" fill="#ffffff"/><rect x="172.0" y="99.0" width="2.0" height="2.0" fill="#19d3e6"/><rect x="176.0" y="104.0" width="1.0" height="3.0" fill="#ff1a1a"/><rect x="176.0" y="95.0" width="1.0" height="2.0" fill="#19d3e6"/><rect x="180.0" y="98.0" width="3.0" height="1.0" fill="#2020ff"/><rect x="199.0" y="89.0" width="1.0" height="3.0" fill="#2020ff"/><rect x="173.0" y="98.0" width="2.0" height="1.0" fill="#ffffff"/><rect x="171.0" y="87.0" width="2.0" height="2.0" fill="#ff1a1a"/><rect x="194.0" y="92.0" width="3.0" height="2.0" fill="#ff1a1a"/><rect x="184.0" y="86.0" width="3.0" height="1.0" fill="#ff1a1a"/><rect x="176.0" y="95.0" width="1.0" height="2.0" fill="#ff1a1a"/><rect x="182.0" y="91.0" width="3.0" height="1.0" fill="#ffffff"/><rect x="172.0" y="101.0" width="3.0" height="1.0" fill="#ffffff"/><rect x="184.0" y="89.0" width="2.0" height="2.0" fill="#19d3e6"/><rect x="197.0" y="104.0" width="2.0" height="1.0" fill="#ff1a1a"/><rect x="193.0" y="98.0" width="2.0" height="3.0" fill="#ffffff"/><rect x="192.0" y="103.0" width="2.0" height="1.0" fill="#19d3e6"/><rect x="194.0" y="100.0" width="2.0" height="1.0" fill="#ffffff"/><path d="M168.0 87.0 L200.0 87.0" stroke="#2020ff" stroke-width="1" fill="none" stroke-dasharray="1 1"/><path d="M265.3 8.0 L280.8 8.0" stroke="#ffffff" stroke-width="1.0" fill="none"/><path d="M280.8 8.0 L280.8 20.5" stroke="#f5b21c" stroke-width="1.0" fill="none"/><path d="M265.3 20.5 L280.8 20.5" stroke="#f5b21c" stroke-width="1.0" fill="none"/><path d="M265.3 8.0 L265.3 20.5" stroke="#f5b21c" stroke-width="1.0" fill="none"/><rect x="273.1" y="11.0" width="3.0" height="3.0" fill="#19d3e6"/><path d="M275.0 14.0 L275.0 18.5" stroke="#ff1a1a" stroke-width="1.0" fill="none"/><path d="M270.3 13.7 L270.3 28.6" stroke="#ffffff" stroke-width="1.0" fill="none"/><path d="M270.3 28.6 L279.1 38.6 L281.5 41.0 L281.5 54.8" stroke="#2020ff" stroke-width="1.2" fill="none"/><path d="M287.0 8.0 L287.0 55.4" stroke="#f5b21c" stroke-width="1.0" fill="none"/><path d="M287.0 55.4 L359.0 55.4" stroke="#f5b21c" stroke-width="1.0" fill="none"/><path d="M287.0 8.0 L359.0 8.0" stroke="#f5b21c" stroke-width="1.0" fill="none"/><path d="M359.0 8.0 L359.0 55.4" stroke="#ffffff" stroke-width="1.0" fill="none"/><rect x="292.3" y="12.7" width="2.0" height="2.0" fill="#ffffff"/><path d="M230 45H242L250 52V58L241 66H238V57L230 50Z" fill="#8c8c8c"/><path d="M212.5 44.8 L242.0 44.8 L250.0 52.0 L250.0 58.0" stroke="#2020ff" stroke-width="1.2" fill="none"/><path d="M213.0 62.0 L237.3 62.0 L237.3 52.0" stroke="#2020ff" stroke-width="1.2" fill="none"/><path d="M200.0 41.0 L211.0 41.0" stroke="#ffffff" stroke-width="1.0" fill="none"/><rect x="220.0" y="48.0" width="2.0" height="1.0" fill="#19d3e6"/><rect x="227.0" y="52.0" width="2.0" height="1.0" fill="#ffffff"/><rect x="228.0" y="45.0" width="3.0" height="1.0" fill="#ffffff"/><rect x="219.0" y="49.0" width="1.0" height="2.0" fill="#ffffff"/><rect x="213.0" y="48.0" width="1.0" height="2.0" fill="#19d3e6"/><rect x="212.0" y="54.0" width="1.0" height="2.0" fill="#19d3e6"/><rect x="227.0" y="54.0" width="2.0" height="3.0" fill="#ffffff"/><rect x="216.0" y="44.0" width="1.0" height="1.0" fill="#ffffff"/><rect x="221.0" y="44.0" width="2.0" height="2.0" fill="#ffffff"/><rect x="220.0" y="48.0" width="2.0" height="3.0" fill="#ffffff"/><rect x="224.0" y="51.0" width="1.0" height="1.0" fill="#ffffff"/><rect x="213.0" y="47.0" width="1.0" height="2.0" fill="#ffffff"/><rect x="224.0" y="45.0" width="2.0" height="1.0" fill="#ffffff"/><rect x="219.0" y="46.0" width="3.0" height="2.0" fill="#ffffff"/><rect x="218.0" y="45.0" width="1.0" height="1.0" fill="#ffffff"/><rect x="225.0" y="52.0" width="2.0" height="2.0" fill="#ffffff"/><rect x="220.0" y="44.0" width="2.0" height="2.0" fill="#ffffff"/><rect x="214.0" y="44.0" width="1.0" height="2.0" fill="#ffffff"/><rect x="223.0" y="54.0" width="2.0" height="1.0" fill="#ffffff"/><rect x="229.0" y="45.0" width="2.0" height="1.0" fill="#ffffff"/><rect x="227.0" y="50.0" width="2.0" height="1.0" fill="#ffffff"/><rect x="213.0" y="46.0" width="2.0" height="1.0" fill="#ffffff"/><rect x="223.0" y="52.0" width="2.0" height="2.0" fill="#ffffff"/><rect x="220.0" y="48.0" width="2.0" height="2.0" fill="#ffffff"/><rect x="219.0" y="49.0" width="2.0" height="1.0" fill="#ffffff"/><rect x="218.0" y="48.0" width="3.0" height="1.0" fill="#ffffff"/><rect x="212.0" y="51.0" width="1.0" height="2.0" fill="#ffffff"/><rect x="223.0" y="51.0" width="2.0" height="1.0" fill="#ffffff"/><rect x="212.0" y="44.0" width="1.0" height="2.0" fill="#19d3e6"/><rect x="219.0" y="46.0" width="1.0" height="3.0" fill="#ffffff"/><rect x="223.0" y="51.5" width="3.0" height="3.0" fill="#19d3e6"/><rect x="259.7" y="43.6" width="10.0" height="11.2" fill="#8c8c8c"/><path d="M259.7 43.6 L269.7 43.6" stroke="#2020ff" stroke-width="1.2" fill="none"/><path d="M259.7 43.6 L259.7 54.8" stroke="#2020ff" stroke-width="1.2" fill="none"/><rect x="268.0" y="76.0" width="1.0" height="3.0" fill="#19d3e6"/><rect x="274.0" y="62.0" width="1.0" height="2.0" fill="#ffffff"/><rect x="260.0" y="62.0" width="2.0" height="1.0" fill="#19d3e6"/><rect x="280.0" y="53.0" width="1.0" height="2.0" fill="#f5b21c"/><rect x="284.0" y="69.0" width="2.0" height="3.0" fill="#2020ff"/><rect x="272.0" y="75.0" width="1.0" height="1.0" fill="#19d3e6"/><rect x="272.0" y="51.0" width="2.0" height="2.0" fill="#ffffff"/><rect x="263.0" y="58.0" width="1.0" height="1.0" fill="#2020ff"/><rect x="269.0" y="56.0" width="1.0" height="3.0" fill="#f5b21c"/><rect x="268.0" y="43.0" width="1.0" height="1.0" fill="#19d3e6"/><rect x="272.0" y="65.0" width="2.0" height="2.0" fill="#19d3e6"/><rect x="278.0" y="47.0" width="1.0" height="3.0" fill="#ffffff"/><rect x="266.0" y="50.0" width="2.0" height="3.0" fill="#ffffff"/><rect x="262.0" y="76.0" width="3.0" height="2.0" fill="#19d3e6"/><rect x="281.0" y="60.0" width="2.0" height="3.0" fill="#2020ff"/><rect x="277.0" y="47.0" width="3.0" height="1.0" fill="#ffffff"/><rect x="286.0" y="74.0" width="2.0" height="3.0" fill="#f5b21c"/><rect x="278.0" y="73.0" width="1.0" height="2.0" fill="#ffffff"/><rect x="261.0" y="62.0" width="1.0" height="3.0" fill="#f5b21c"/><rect x="268.0" y="57.0" width="1.0" height="2.0" fill="#ffffff"/><rect x="279.0" y="70.0" width="1.0" height="2.0" fill="#f5b21c"/><rect x="272.0" y="71.0" width="2.0" height="1.0" fill="#ffffff"/><rect x="283.0" y="47.0" width="1.0" height="3.0" fill="#f5b21c"/><rect x="282.0" y="65.0" width="2.0" height="1.0" fill="#19d3e6"/><rect x="269.0" y="54.0" width="1.0" height="1.0" fill="#ffffff"/><rect x="278.0" y="63.0" width="2.0" height="2.0" fill="#ffffff"/><rect x="281.0" y="63.0" width="2.0" height="2.0" fill="#19d3e6"/><rect x="261.0" y="65.0" width="2.0" height="3.0" fill="#2020ff"/><rect x="265.0" y="43.0" width="2.0" height="3.0" fill="#19d3e6"/><rect x="271.0" y="42.0" width="1.0" height="3.0" fill="#2020ff"/><rect x="270.0" y="52.0" width="2.0" height="3.0" fill="#ffffff"/><rect x="263.0" y="63.0" width="1.0" height="2.0" fill="#f5b21c"/><rect x="277.0" y="66.0" width="1.0" height="2.0" fill="#19d3e6"/><rect x="260.0" y="53.0" width="3.0" height="2.0" fill="#2020ff"/><rect x="279.0" y="55.0" width="2.0" height="1.0" fill="#f5b21c"/><rect x="283.0" y="68.0" width="1.0" height="1.0" fill="#ffffff"/><rect x="283.0" y="77.0" width="3.0" height="1.0" fill="#19d3e6"/><rect x="277.0" y="63.0" width="2.0" height="2.0" fill="#ffffff"/><rect x="261.0" y="57.0" width="1.0" height="2.0" fill="#ffffff"/><rect x="262.0" y="48.0" width="2.0" height="3.0" fill="#f5b21c"/><rect x="286.0" y="62.0" width="2.0" height="2.0" fill="#ffffff"/><rect x="262.0" y="62.0" width="3.0" height="1.0" fill="#ffffff"/><rect x="266.0" y="67.0" width="1.0" height="1.0" fill="#19d3e6"/><rect x="283.0" y="69.0" width="2.0" height="1.0" fill="#f5b21c"/><rect x="272.0" y="51.0" width="2.0" height="1.0" fill="#19d3e6"/><rect x="269.0" y="48.0" width="3.0" height="1.0" fill="#f5b21c"/><rect x="271.0" y="60.0" width="2.0" height="2.0" fill="#2020ff"/><rect x="262.0" y="56.0" width="1.0" height="1.0" fill="#ffffff"/><rect x="286.0" y="68.0" width="2.0" height="1.0" fill="#19d3e6"/><rect x="284.0" y="67.0" width="2.0" height="2.0" fill="#2020ff"/><rect x="266.0" y="50.0" width="1.0" height="2.0" fill="#ffffff"/><rect x="276.0" y="56.0" width="2.0" height="2.0" fill="#19d3e6"/><rect x="282.0" y="61.0" width="2.0" height="1.0" fill="#ffffff"/><rect x="266.0" y="46.0" width="1.0" height="1.0" fill="#2020ff"/><rect x="268.0" y="60.0" width="1.0" height="3.0" fill="#f5b21c"/><rect x="273.0" y="71.0" width="2.0" height="1.0" fill="#ffffff"/><rect x="260.0" y="74.0" width="1.0" height="1.0" fill="#ffffff"/><rect x="286.0" y="50.0" width="3.0" height="2.0" fill="#ffffff"/><rect x="261.0" y="57.0" width="1.0" height="1.0" fill="#2020ff"/><rect x="275.0" y="71.0" width="3.0" height="2.0" fill="#2020ff"/><rect x="274.0" y="67.0" width="1.0" height="1.0" fill="#ffffff"/><rect x="263.0" y="72.0" width="1.0" height="3.0" fill="#ffffff"/><rect x="279.0" y="57.0" width="1.0" height="3.0" fill="#ffffff"/><rect x="283.0" y="73.0" width="1.0" height="1.0" fill="#f5b21c"/><rect x="261.0" y="58.0" width="1.0" height="1.0" fill="#19d3e6"/><rect x="263.0" y="45.0" width="2.0" height="1.0" fill="#19d3e6"/><rect x="286.0" y="43.0" width="3.0" height="2.0" fill="#2020ff"/><rect x="277.0" y="70.0" width="2.0" height="2.0" fill="#19d3e6"/><rect x="264.0" y="59.0" width="1.0" height="3.0" fill="#ffffff"/><rect x="284.0" y="65.0" width="1.0" height="2.0" fill="#ffffff"/><rect x="267.0" y="70.5" width="3.0" height="3.0" fill="#19d3e6"/><rect x="274.5" y="70.5" width="3.0" height="3.0" fill="#19d3e6"/><circle cx="252" cy="67" r="3.5" stroke="#f5b21c" stroke-width="1" fill="none"/><circle cx="257" cy="72" r="3.5" stroke="#fff" stroke-width="1" fill="none"/><path d="M200.0 63.5 L220.0 86.0" stroke="#ff1a1a" stroke-width="1" fill="none"/><path d="M200.0 65.0 L220.0 86.0" stroke="#ffffff" stroke-width="1" fill="none"/><path d="M200.0 66.5 L220.0 86.0" stroke="#ff1a1a" stroke-width="1" fill="none"/><path d="M200.0 68.0 L220.0 86.0" stroke="#ffffff" stroke-width="1" fill="none"/><path d="M200.0 69.5 L220.0 86.0" stroke="#ff1a1a" stroke-width="1" fill="none"/><path d="M200.0 71.0 L220.0 86.0" stroke="#ffffff" stroke-width="1" fill="none"/><path d="M200.0 72.5 L220.0 86.0" stroke="#ff1a1a" stroke-width="1" fill="none"/><path d="M200.0 82.0 L200.0 104.5" stroke="#ffffff" stroke-width="1" fill="none"/><path d="M202.0 82.0 L202.0 104.5" stroke="#ff1a1a" stroke-width="1" fill="none"/><path d="M204.0 82.0 L204.0 104.5" stroke="#ffffff" stroke-width="1" fill="none"/><path d="M206.0 82.0 L206.0 104.5" stroke="#ff1a1a" stroke-width="1" fill="none"/><path d="M208.0 82.0 L208.0 104.5" stroke="#ffffff" stroke-width="1" fill="none"/><path d="M210.0 82.0 L210.0 104.5" stroke="#ff1a1a" stroke-width="1" fill="none"/><path d="M212.0 82.0 L212.0 104.5" stroke="#ffffff" stroke-width="1" fill="none"/><path d="M214.0 82.0 L214.0 104.5" stroke="#ff1a1a" stroke-width="1" fill="none"/><path d="M216.0 82.0 L216.0 104.5" stroke="#ffffff" stroke-width="1" fill="none"/><path d="M218.0 82.0 L218.0 104.5" stroke="#ff1a1a" stroke-width="1" fill="none"/><path d="M220.0 82.0 L220.0 104.5" stroke="#ffffff" stroke-width="1" fill="none"/><path d="M220.0 76.0 L233.6 76.0" stroke="#f5b21c" stroke-width="1.0" fill="none"/><path d="M233.6 76.0 L233.6 92.0" stroke="#f5b21c" stroke-width="1.0" fill="none"/><path d="M220.0 92.0 L233.6 92.0" stroke="#f5b21c" stroke-width="1.0" fill="none"/><path d="M220.0 76.0 L220.0 92.0" stroke="#ffffff" stroke-width="1.0" fill="none"/><rect x="223.5" y="68.5" width="3.0" height="3.0" fill="#19d3e6"/><rect x="223.5" y="73.5" width="3.0" height="3.0" fill="#19d3e6"/><rect x="223.5" y="90.5" width="3.0" height="3.0" fill="#19d3e6"/><path d="M222.0 80.0 L233.0 80.0" stroke="#2020ff" stroke-width="1.0" fill="none"/><path d="M222.0 84.0 L233.0 84.0" stroke="#2020ff" stroke-width="1.0" fill="none"/><path d="M241.0 84.6 L305.0 84.6" stroke="#ffffff" stroke-width="1.0" fill="none"/><path d="M305.0 84.6 L305.0 106.0" stroke="#ffffff" stroke-width="1.0" fill="none"/><path d="M241.0 106.0 L305.0 106.0" stroke="#ffffff" stroke-width="1.0" fill="none"/><path d="M241.0 84.6 L241.0 106.0" stroke="#f5b21c" stroke-width="1.0" fill="none"/><path d="M237.3 64.7 L237.3 104.5" stroke="#ff1a1a" stroke-width="1.2" fill="none"/><path d="M247.3 88.3 L285.8 88.3" stroke="#ff1a1a" stroke-width="1.2" fill="none"/><path d="M277.0 66.0 L285.8 74.7 L285.8 97.0" stroke="#ff1a1a" stroke-width="1.2" fill="none"/><path d="M239.8 92.0 L246.0 87.0 L254.7 84.6 L266.0 74.7" stroke="#2020ff" stroke-width="1.2" fill="none"/><path d="M246.0 102.0 L257.0 102.0 L266.0 97.0 L275.0 97.0" stroke="#2020ff" stroke-width="1.2" fill="none"/><path d="M275.0 97.0 L281.0 97.0 L281.0 104.5" stroke="#2020ff" stroke-width="1.2" fill="none"/><path d="M288.0 64.7 L300.0 64.7" stroke="#f5b21c" stroke-width="1.0" fill="none"/><path d="M300.0 64.7 L300.0 77.0" stroke="#ffffff" stroke-width="1.0" fill="none"/><path d="M288.0 77.0 L300.0 77.0" stroke="#f5b21c" stroke-width="1.0" fill="none"/><path d="M288.0 64.7 L288.0 77.0" stroke="#f5b21c" stroke-width="1.0" fill="none"/><rect x="293.5" y="60.0" width="4.0" height="4.0" fill="#4a58c8"/><rect x="293.5" y="76.0" width="4.0" height="4.0" fill="#4a58c8"/><rect x="292.7" y="12.7" width="2.0" height="2.0" fill="#ffffff"/><rect x="342.5" y="12.7" width="2.0" height="2.0" fill="#ffffff"/><rect x="292.7" y="47.5" width="2.0" height="2.0" fill="#ffffff"/><rect x="302.7" y="47.5" width="2.0" height="2.0" fill="#ffffff"/><path d="M343.5 13.7 L343.5 18.7 L354.7 29.9 L364.6 29.9" stroke="#2020ff" stroke-width="1.2" fill="none"/><path d="M351.0 13.7 L364.6 13.7 L377.0 24.9" stroke="#2020ff" stroke-width="1.2" fill="none"/><path d="M360.0 13.7 L365.0 13.7" stroke="#9a9a9a" stroke-width="1.2" fill="none"/><rect x="349.0" y="11.7" width="4.0" height="4.0" fill="#4a58c8"/><path d="M363.4 26.0 L382.0 26.0" stroke="#ffffff" stroke-width="1.0" fill="none"/><path d="M382.0 26.0 L382.0 55.4" stroke="#f5b21c" stroke-width="1.0" fill="none"/><path d="M363.4 55.4 L382.0 55.4" stroke="#ffffff" stroke-width="1.0" fill="none"/><path d="M363.4 26.0 L363.4 55.4" stroke="#f5b21c" stroke-width="1.0" fill="none"/><rect x="364.5" y="27.3" width="4.0" height="4.0" fill="#4a58c8"/><rect x="377.0" y="27.3" width="4.0" height="4.0" fill="#4a58c8"/><rect x="364.5" y="48.4" width="4.0" height="4.0" fill="#4a58c8"/><rect x="377.0" y="48.4" width="4.0" height="4.0" fill="#4a58c8"/><path d="M303.7 48.5 L326.0 48.5 L330.4 53.5 L330.4 61.6" stroke="#2020ff" stroke-width="1.2" fill="none"/><path d="M308.5 48.5 L316.0 48.5" stroke="#ffffff" stroke-width="1" fill="none"/><path d="M293.7 48.5 L293.7 52.3 L298.7 56.0 L318.6 56.0 L320.5 64.7 L328.6 74.7" stroke="#2020ff" stroke-width="1.2" fill="none"/><path d="M306.0 61.0 L334.8 61.0" stroke="#f5b21c" stroke-width="1.0" fill="none"/><path d="M334.8 61.0 L334.8 79.6" stroke="#ffffff" stroke-width="1.0" fill="none"/><path d="M306.0 79.6 L334.8 79.6" stroke="#ffffff" stroke-width="1.0" fill="none"/><path d="M306.0 61.0 L306.0 79.6" stroke="#f5b21c" stroke-width="1.0" fill="none"/><rect x="308.5" y="61.5" width="4.0" height="4.0" fill="#4a58c8"/><rect x="328.4" y="61.5" width="4.0" height="4.0" fill="#4a58c8"/><rect x="328.4" y="73.9" width="4.0" height="4.0" fill="#4a58c8"/><rect x="308.5" y="73.9" width="4.0" height="4.0" fill="#19d3e6"/><path d="M362.0 56.0 L353.4 64.7 L348.5 74.7 L348.5 80.9 L341.0 89.6 L341.0 98.3 L347.2 104.5" stroke="#2020ff" stroke-width="1.2" fill="none"/><path d="M321.0 97.7 L341.0 97.7" stroke="#2020ff" stroke-width="1.2" fill="none"/><path d="M329.0 97.7 L337.0 97.7" stroke="#9a9a9a" stroke-width="1.2" fill="none"/><path d="M350.3 65.3 L363.4 65.3" stroke="#ffffff" stroke-width="1.0" fill="none"/><path d="M363.4 65.3 L363.4 71.5" stroke="#f5b21c" stroke-width="1.0" fill="none"/><path d="M350.3 71.5 L363.4 71.5" stroke="#f5b21c" stroke-width="1.0" fill="none"/><path d="M350.3 65.3 L350.3 71.5" stroke="#f5b21c" stroke-width="1.0" fill="none"/><path d="M367.0 65.3 L379.6 65.3" stroke="#ffffff" stroke-width="1.0" fill="none"/><path d="M379.6 65.3 L379.6 71.5" stroke="#f5b21c" stroke-width="1.0" fill="none"/><path d="M367.0 71.5 L379.6 71.5" stroke="#f5b21c" stroke-width="1.0" fill="none"/><path d="M367.0 65.3 L367.0 71.5" stroke="#f5b21c" stroke-width="1.0" fill="none"/><path d="M361.0 68.0 L370.0 68.0" stroke="#2020ff" stroke-width="1.2" fill="none"/><path d="M345.3 75.3 L380.2 75.3" stroke="#ffffff" stroke-width="1.0" fill="none"/><path d="M380.2 75.3 L380.2 87.1" stroke="#f5b21c" stroke-width="1.0" fill="none"/><path d="M345.3 87.1 L380.2 87.1" stroke="#f5b21c" stroke-width="1.0" fill="none"/><path d="M345.3 75.3 L345.3 87.1" stroke="#f5b21c" stroke-width="1.0" fill="none"/><path d="M377.7 52.3 L377.7 70.9" stroke="#9a9a9a" stroke-width="1.2" fill="none"/><path d="M377.7 70.9 L377.7 80.9 L374.6 85.8 L374.6 94.6" stroke="#ff1a1a" stroke-width="1.5" fill="none"/><circle cx="374.8" cy="99.5" r="7.8" stroke="#f5b21c" stroke-width="1" fill="none"/><path d="M290.0 84.0 L326.0 84.0" stroke="#ffffff" stroke-width="1.0" fill="none"/><path d="M326.0 84.0 L326.0 106.0" stroke="#f5b21c" stroke-width="1.0" fill="none"/><rect x="289.5" y="95.5" width="3.0" height="3.0" fill="#19d3e6"/></svg>
<!-- PCB END -->
<!-- right panel -->
<div class="a" style="left:1562px;top:123px;width:317px;height:29px;background:#6b6b6b"></div>
<div class="a" style="left:1563px;top:127px;width:50px;height:26px;background:#8c8c8c;border-radius:3px 3px 0 0"></div>
<div class="t" style="left:1567px;top:135px;font-size:12px">Options</div>
<div class="a" style="left:1619px;top:127px;width:31px;height:26px;background:#fff;border-radius:3px 3px 0 0"></div>
<div class="t" style="left:1623px;top:135px;color:#000;font-size:12px">Find</div>
<div class="a" style="left:1655px;top:127px;width:52px;height:26px;background:#8c8c8c;border-radius:3px 3px 0 0"></div>
<div class="t" style="left:1660px;top:135px;font-size:12px">Visibility</div>
<div class="a" style="left:1562px;top:153px;width:317px;height:26px;background:linear-gradient(#444,#333);border-top:1px solid #5a5a5a;border-bottom:1px solid #5a5a5a"></div>
<div class="t" style="left:1572px;top:161px;font-weight:bold;font-size:13px">Find</div>


<!-- right panel content -->
<svg class="a" style="left:1850px;top:168px" width="12" height="5"><rect x="0" y="1" width="11" height="2.5" fill="#fff"/></svg>
<svg class="a" style="left:1874px;top:160px" width="5" height="12"><path d="M2.5 1.5h3M0.5 5.5v5h5" stroke="#fff" fill="none"/></svg>
<div class="a" style="left:1569px;top:187px;width:271px;height:223px;border:1px solid #e0e0e0"></div>
<div class="a" style="left:1574px;top:180px;width:133px;height:14px;background:#2b2b2b"></div>
<div class="t rp" style="left:1577px;top:181px;font-weight:bold;font-size:11px">Design Object Find Filter</div>
<div class="btn" style="left:1574px;top:205px;width:82px;height:22px;line-height:20px;font-size:11.5px">All On</div>
<div class="btn" style="left:1671px;top:205px;width:82px;height:22px;line-height:20px;font-size:11.5px">All Off</div>
<svg class="a" style="left:1576px;top:232px" width="12" height="12"><rect width="11" height="11" fill="#fff"/></svg><div class="t rp" style="left:1594px;top:232px">Groups</div><svg class="a" style="left:1576px;top:250px" width="12" height="12"><rect width="11" height="11" fill="#fff"/></svg><div class="t rp dis" style="left:1594px;top:250px">Comps</div><svg class="a" style="left:1576px;top:268px" width="12" height="12"><rect width="11" height="11" fill="#fff"/><path d="M1.8 5.8L4.2 9 9.5 1.5" stroke="#000" stroke-width="1.2" fill="none"/></svg><div class="t rp" style="left:1594px;top:268px">Symbols</div><svg class="a" style="left:1576px;top:286px" width="12" height="12"><rect width="11" height="11" fill="#fff"/></svg><div class="t rp dis" style="left:1594px;top:286px">Functions</div><svg class="a" style="left:1576px;top:304px" width="12" height="12"><rect width="11" height="11" fill="#fff"/></svg><div class="t rp dis" style="left:1594px;top:304px">Nets</div><svg class="a" style="left:1576px;top:322px" width="12" height="12"><rect width="11" height="11" fill="#fff"/></svg><div class="t rp dis" style="left:1594px;top:322px">Pins</div><svg class="a" style="left:1576px;top:340px" width="12" height="12"><rect width="11" height="11" fill="#fff"/><path d="M1.8 5.8L4.2 9 9.5 1.5" stroke="#000" stroke-width="1.2" fill="none"/></svg><div class="t rp" style="left:1594px;top:340px">Vias</div><svg class="a" style="left:1576px;top:358px" width="12" height="12"><rect width="11" height="11" fill="#fff"/><path d="M1.8 5.8L4.2 9 9.5 1.5" stroke="#000" stroke-width="1.2" fill="none"/></svg><div class="t rp" style="left:1594px;top:358px">Fingers</div><svg class="a" style="left:1576px;top:376px" width="12" height="12"><rect width="11" height="11" fill="#fff"/><path d="M1.8 5.8L4.2 9 9.5 1.5" stroke="#000" stroke-width="1.2" fill="none"/></svg><div class="t rp" style="left:1594px;top:376px">Clines</div><svg class="a" style="left:1576px;top:394px" width="12" height="12"><rect width="11" height="11" fill="#fff"/><path d="M1.8 5.8L4.2 9 9.5 1.5" stroke="#000" stroke-width="1.2" fill="none"/></svg><div class="t rp" style="left:1594px;top:394px">Lines</div><svg class="a" style="left:1673px;top:232px" width="12" height="12"><rect width="11" height="11" fill="#fff"/><path d="M1.8 5.8L4.2 9 9.5 1.5" stroke="#000" stroke-width="1.2" fill="none"/></svg><div class="t rp" style="left:1691px;top:232px">Bond wires</div><svg class="a" style="left:1673px;top:250px" width="12" height="12"><rect width="11" height="11" fill="#fff"/><path d="M1.8 5.8L4.2 9 9.5 1.5" stroke="#000" stroke-width="1.2" fill="none"/></svg><div class="t rp" style="left:1691px;top:250px">Shapes</div><svg class="a" style="left:1673px;top:268px" width="12" height="12"><rect width="11" height="11" fill="#fff"/></svg><div class="t rp dis" style="left:1691px;top:268px">Voids/Cavities</div><svg class="a" style="left:1673px;top:286px" width="12" height="12"><rect width="11" height="11" fill="#fff"/></svg><div class="t rp dis" style="left:1691px;top:286px">Cline segs</div><svg class="a" style="left:1673px;top:304px" width="12" height="12"><rect width="11" height="11" fill="#fff"/></svg><div class="t rp dis" style="left:1691px;top:304px">Other segs</div><svg class="a" style="left:1673px;top:322px" width="12" height="12"><rect width="11" height="11" fill="#fff"/><path d="M1.8 5.8L4.2 9 9.5 1.5" stroke="#000" stroke-width="1.2" fill="none"/></svg><div class="t rp" style="left:1691px;top:322px">Figures</div><svg class="a" style="left:1673px;top:340px" width="12" height="12"><rect width="11" height="11" fill="#fff"/></svg><div class="t rp dis" style="left:1691px;top:340px">DRC errors</div><svg class="a" style="left:1673px;top:358px" width="12" height="12"><rect width="11" height="11" fill="#fff"/><path d="M1.8 5.8L4.2 9 9.5 1.5" stroke="#000" stroke-width="1.2" fill="none"/></svg><div class="t rp" style="left:1691px;top:358px">Text</div><svg class="a" style="left:1673px;top:376px" width="12" height="12"><rect width="11" height="11" fill="#fff"/></svg><div class="t rp dis" style="left:1691px;top:376px">Ratsnests</div><svg class="a" style="left:1673px;top:394px" width="12" height="12"><rect width="11" height="11" fill="#fff"/></svg><div class="t rp dis" style="left:1691px;top:394px">Rat Ts</div>
<div class="a" style="left:1569px;top:409px;width:271px;height:66px;border:1px solid #e0e0e0"></div>
<div class="a" style="left:1577px;top:430px;width:11px;height:11px;background:#fff"></div>
<div class="t rp" style="left:1595px;top:431px;font-size:11px">By Saved Query</div>
<div class="a" style="left:1575px;top:446px;width:153px;height:22px;background:#434343;border:1px solid #5e5e5e"></div>
<svg class="a" style="left:1711px;top:453px" width="12" height="8"><path d="M0 0H12L6 8z" fill="#707070"/></svg>
<div class="btn" style="left:1574px;top:483px;width:108px;height:22px;line-height:20px;font-size:11px">Find by Query...</div>
<div class="a" style="left:1569px;top:525px;width:271px;height:73px;border:1px solid #e0e0e0"></div>
<div class="a" style="left:1574px;top:518px;width:82px;height:14px;background:#2b2b2b"></div>
<div class="t rp" style="left:1577px;top:519px;font-weight:bold;font-size:11px">Find By Name</div>
<div class="a" style="left:1574px;top:544px;width:130px;height:22px;background:#474747;border:1px solid #6a6a6a"></div>
<div class="t rp" style="left:1577px;top:550px;font-size:11px">Symbol</div>
<svg class="a" style="left:1687px;top:550px" width="12" height="8"><path d="M0 0H12L6 8z" fill="#fff"/></svg>
<div class="a" style="left:1711px;top:544px;width:63px;height:22px;background:#474747;border:1px solid #6a6a6a"></div>
<div class="t rp" style="left:1714px;top:550px;font-size:11px">Name</div>
<svg class="a" style="left:1757px;top:550px" width="12" height="8"><path d="M0 0H12L6 8z" fill="#fff"/></svg>
<div class="t rp" style="left:1575px;top:576px;font-size:10px">&gt;</div>
<div class="a" style="left:1590px;top:569px;width:113px;height:22px;background:#444;border:1px solid #6a6a6a"></div>
<div class="btn" style="left:1711px;top:569px;width:82px;height:22px;line-height:20px;font-size:11px">More...</div>

<!-- command panel -->
<div class="a" style="left:39px;top:747px;width:1108px;height:73px;background:#2b2b2b"></div>
<div class="a" style="left:39px;top:747px;width:1108px;height:26px;background:linear-gradient(#454545,#303030);border-bottom:1px solid #5a5a5a"></div>
<div class="t" style="left:49px;top:753px;font-weight:bold;font-size:14px">Command</div>
<div class="a" style="left:48px;top:782px;width:1090px;height:40px;background:#3c3c3c;border:1px solid #6a6a6a"></div>
<div class="t" style="left:56px;top:785px;line-height:12.5px;font-size:11.5px">last pick:&nbsp;&nbsp;-2208.34 18505.02<br>No element found.<br>Grids are drawn 10.24, 10.24 apart for enhanced viewing.</div>
<!-- view panel -->
<div class="a" style="left:1153px;top:747px;width:403px;height:73px;background:#000"></div>
<div class="a" style="left:1153px;top:747px;width:403px;height:26px;background:linear-gradient(#454545,#303030);border-bottom:1px solid #5a5a5a"></div>
<div class="t" style="left:1163px;top:753px;font-weight:bold;font-size:14px">View</div>
<svg class="a" style="left:1224px;top:775px" width="260" height="46"><path d="M1.5 46V6.5L6.5 1.5H253.5L258.5 6.5V46" stroke="#fff" stroke-width="1" fill="none" shape-rendering="crispEdges"/></svg>


<!-- dialog -->
<div class="a" style="left:639px;top:295px;width:642px;height:437px;background:#3e3e3e;border-left:1px solid #222;border-top:1px solid #222"></div>
<div class="a" style="left:640px;top:296px;width:641px;height:30px;background:#fff"></div>
<svg class="a" style="left:648px;top:302px" width="16" height="16" viewBox="0 0 16 16"><rect x="0.5" y="0.5" width="15" height="15" rx="2.5" fill="#0f2330" stroke="#c8203a"/><line x1="1" y1="1" x2="5" y2="5" stroke="#e8173a" stroke-width="1.7"/><line x1="11" y1="11" x2="15" y2="15" stroke="#e8173a" stroke-width="1.7"/><line x1="4" y1="12" x2="12" y2="4" stroke="#e8173a" stroke-width="1.8"/><circle cx="5.3" cy="5.3" r="2.4" fill="#fff"/><circle cx="11" cy="11" r="2.4" fill="#fff"/><circle cx="12.2" cy="3.8" r="2" fill="#0f2330" stroke="#e6eef0" stroke-width="1.3"/><circle cx="3.8" cy="12.2" r="2" fill="#0f2330" stroke="#e6eef0" stroke-width="1.3"/></svg>
<div class="t" style="left:669px;top:304px;color:#000;font-size:12.5px">Pick</div>
<svg class="a" style="left:1259px;top:303px" width="14" height="14"><path d="M1.5 1.5L12.5 12.5M12.5 1.5L1.5 12.5" stroke="#111" stroke-width="1.2"/></svg>
<div class="t dlg" style="left:651px;top:343px">Look in:</div>
<div class="a" style="left:767px;top:337px;width:335px;height:22px;background:#474747;border:1px solid #6a6a6a"></div>
<svg class="a" style="left:772px;top:340px" width="14" height="17"><rect x="0" y="0" width="13" height="16" fill="#f8d775"/><path d="M10 16V10h3v6z" fill="#e2b94a"/></svg>
<div class="t dlg" style="left:792px;top:343px;font-size:11px">G:\cadence\low_price_ten202108061\PCB</div>
<svg class="a" style="left:1085px;top:344px" width="12" height="8"><path d="M0 0H12L6 8z" fill="#fff"/></svg>
<svg class="a" style="left:1111px;top:341px" width="14" height="14"><circle cx="7" cy="7" r="6.5" fill="#6e6e6e"/><path d="M3 7h8M3 7l3.5-3.5M3 7l3.5 3.5" stroke="#aaa" stroke-width="2"/></svg>
<svg class="a" style="left:1139px;top:341px" width="14" height="14"><circle cx="7" cy="7" r="6.5" fill="#6e6e6e"/><path d="M3 7h8M11 7L7.5 3.5M11 7l-3.5 3.5" stroke="#aaa" stroke-width="2"/></svg>
<svg class="a" style="left:1167px;top:341px" width="14" height="14"><circle cx="7" cy="7" r="6.5" fill="#2f8f2f"/><path d="M7 12V3M7 3L3.5 6.5M7 3l3.5 3.5" stroke="#fff" stroke-width="2"/></svg>
<svg class="a" style="left:1195px;top:339px" width="16" height="17"><path d="M1 4h5l1 2h7v9H1z" fill="#d9a945"/><path d="M2 7h12l-1.5 8H1z" fill="#f3cc6a"/><path d="M11 10v6M8 13h6" stroke="#3cbf3c" stroke-width="2"/></svg>
<svg class="a" style="left:1223px;top:340px" width="16" height="16"><rect x="0.5" y="0.5" width="15" height="15" rx="2" fill="#fff" stroke="#888"/><rect x="4" y="4" width="3" height="3" fill="#111"/><rect x="9" y="4" width="3" height="3" fill="#111"/><rect x="4" y="9" width="3" height="3" fill="#111"/><rect x="9" y="9" width="3" height="3" fill="#111"/></svg>
<svg class="a" style="left:1251px;top:340px" width="16" height="16"><rect x="0.5" y="0.5" width="15" height="15" rx="2" fill="#fff" stroke="#888"/><path d="M4 4.5h8M4 6.5h8M4 8.5h8M4 10.5h8M4 12.5h8" stroke="#111" stroke-width="1"/></svg>
<!-- places -->
<div class="a" style="left:651px;top:365px;width:107px;height:279px;background:#2d2d2d;border:1px solid #e8e8e8"></div>
<svg class="a" style="left:656px;top:369px" width="24" height="21"><path d="M9 0.5l13 2v11l-13-1.5z" fill="#2aa6f0"/><path d="M9 12l13 1.5-1 1-12-1.3z" fill="#888"/><path d="M13 14v2l3 .5v-2z" fill="#bbb"/><path d="M1 16.5l9-2 12 2.2-8.5 3z" fill="#ddd"/><path d="M1 16.5l12.5 4.5 0 0.8L1 17.3z" fill="#999"/></svg>
<div class="t dlg" style="left:685px;top:375px">My Computer</div>
<svg class="a" style="left:658px;top:397px" width="20" height="22"><path d="M1 2l7-2v20l-7-2z" fill="#f1c75d"/><path d="M8 0h3v20H8z" fill="#d7a942"/><circle cx="12.5" cy="9" r="3.3" fill="#c69a6b"/><path d="M10 7.5q2.5-3 5.5 0l-.2-2q-2.5-2-5.3 0z" fill="#222"/><path d="M7.5 21q0-8 5-8t5.5 8z" fill="#2f9a5a"/></svg>
<div class="t dlg" style="left:685px;top:403px">Admin</div>
<div class="a" style="left:758px;top:365px;width:5px;height:279px;background:#9c9c9c;border-left:1px solid #7a7a7a"></div>
<!-- file list -->
<div class="a" style="left:763px;top:365px;width:507px;height:279px;background:#4a4a4a;border:1px solid #5c5c5c;border-left:none"></div>
<div class="a" style="left:763px;top:366px;width:429px;height:25px;background:#2c2c2c;border-bottom:1px solid #5a5a5a"></div>
<div class="a" style="left:997px;top:366px;width:1px;height:24px;background:#4a4a4a"></div>
<div class="a" style="left:1047px;top:366px;width:1px;height:24px;background:#4a4a4a"></div>
<div class="a" style="left:1102px;top:366px;width:1px;height:24px;background:#4a4a4a"></div>
<div class="a" style="left:1191px;top:366px;width:1px;height:24px;background:#4a4a4a"></div>
<div class="t dlg" style="left:786px;top:371px">Name</div>
<div class="t dlg" style="left:1002px;top:371px">Size</div>
<div class="t dlg" style="left:1052px;top:371px">Type</div>
<div class="t dlg" style="left:1107px;top:371px">Date Modified</div>
<svg class="a" style="left:769px;top:393px" width="14" height="16"><rect x="0" y="0" width="13" height="16" fill="#f8d775"/><path d="M10 16V10h3v6z" fill="#e2b94a"/></svg><div class="t dlg" style="left:789px;top:396px;font-size:11px">devices</div><div class="t dlg" style="left:1051px;top:396px;font-size:11px">File...lder</div><div class="t dlg" style="left:1106px;top:396px;font-size:11px">2021/8/3 10:38</div><svg class="a" style="left:769px;top:413px" width="14" height="16"><rect x="0" y="0" width="13" height="16" fill="#f8d775"/><path d="M10 16V10h3v6z" fill="#e2b94a"/></svg><div class="t dlg" style="left:789px;top:416px;font-size:11px">signoise.run</div><div class="t dlg" style="left:1051px;top:416px;font-size:11px">File...lder</div><div class="t dlg" style="left:1106px;top:416px;font-size:11px">2021/8/22 15:38</div><svg class="a" style="left:769px;top:433px" width="14" height="16"><rect x="0" y="0" width="13" height="16" fill="#f8d775"/><path d="M10 16V10h3v6z" fill="#e2b94a"/></svg><div class="t dlg" style="left:789px;top:436px;font-size:11px">symbols</div><div class="t dlg" style="left:1051px;top:436px;font-size:11px">File...lder</div><div class="t dlg" style="left:1106px;top:436px;font-size:11px">2021/8/22 15:38</div><svg class="a" style="left:767px;top:453px" width="16" height="16" viewBox="0 0 16 16"><rect x="0.5" y="0.5" width="15" height="15" rx="1" fill="#0f2330" stroke="#c8203a"/><line x1="1" y1="1" x2="5" y2="5" stroke="#e8173a" stroke-width="1.7"/><line x1="11" y1="11" x2="15" y2="15" stroke="#e8173a" stroke-width="1.7"/><line x1="4" y1="12" x2="12" y2="4" stroke="#e8173a" stroke-width="1.8"/><circle cx="5.3" cy="5.3" r="2.4" fill="#fff"/><circle cx="11" cy="11" r="2.4" fill="#fff"/><circle cx="12.2" cy="3.8" r="2" fill="#0f2330" stroke="#e6eef0" stroke-width="1.3"/><circle cx="3.8" cy="12.2" r="2" fill="#0f2330" stroke="#e6eef0" stroke-width="1.3"/></svg><div class="t dlg" style="left:789px;top:456px;font-size:11px">check.mdd</div><div class="t dlg" style="left:945px;width:101px;text-align:right;top:456px;font-size:11px">234 KB</div><div class="t dlg" style="left:1051px;top:456px;font-size:11px">mdd File</div><div class="t dlg" style="left:1106px;top:456px;font-size:11px">2021/8/23 22:38</div><svg class="a" style="left:767px;top:473px" width="16" height="16" viewBox="0 0 16 16"><rect x="0.5" y="0.5" width="15" height="15" rx="1" fill="#0f2330" stroke="#c8203a"/><line x1="1" y1="1" x2="5" y2="5" stroke="#e8173a" stroke-width="1.7"/><line x1="11" y1="11" x2="15" y2="15" stroke="#e8173a" stroke-width="1.7"/><line x1="4" y1="12" x2="12" y2="4" stroke="#e8173a" stroke-width="1.8"/><circle cx="5.3" cy="5.3" r="2.4" fill="#fff"/><circle cx="11" cy="11" r="2.4" fill="#fff"/><circle cx="12.2" cy="3.8" r="2" fill="#0f2330" stroke="#e6eef0" stroke-width="1.3"/><circle cx="3.8" cy="12.2" r="2" fill="#0f2330" stroke="#e6eef0" stroke-width="1.3"/></svg><div class="t dlg" style="left:789px;top:476px;font-size:11px">power.mdd</div><div class="t dlg" style="left:945px;width:101px;text-align:right;top:476px;font-size:11px">19.6 MB</div><div class="t dlg" style="left:1051px;top:476px;font-size:11px">mdd File</div><div class="t dlg" style="left:1106px;top:476px;font-size:11px">2021/7/12 17:48</div><svg class="a" style="left:767px;top:493px" width="16" height="16" viewBox="0 0 16 16"><rect x="0.5" y="0.5" width="15" height="15" rx="1" fill="#0f2330" stroke="#c8203a"/><line x1="1" y1="1" x2="5" y2="5" stroke="#e8173a" stroke-width="1.7"/><line x1="11" y1="11" x2="15" y2="15" stroke="#e8173a" stroke-width="1.7"/><line x1="4" y1="12" x2="12" y2="4" stroke="#e8173a" stroke-width="1.8"/><circle cx="5.3" cy="5.3" r="2.4" fill="#fff"/><circle cx="11" cy="11" r="2.4" fill="#fff"/><circle cx="12.2" cy="3.8" r="2" fill="#0f2330" stroke="#e6eef0" stroke-width="1.3"/><circle cx="3.8" cy="12.2" r="2" fill="#0f2330" stroke="#e6eef0" stroke-width="1.3"/></svg><div class="t dlg" style="left:789px;top:496px;font-size:11px">wd1.mdd</div><div class="t dlg" style="left:945px;width:101px;text-align:right;top:496px;font-size:11px">142 KB</div><div class="t dlg" style="left:1051px;top:496px;font-size:11px">mdd File</div><div class="t dlg" style="left:1106px;top:496px;font-size:11px">2021/8/2 19:57</div>
<div class="t dlg" style="left:651px;top:656px">File name:</div>
<div class="a" style="left:767px;top:650px;width:415px;height:22px;background:#474747;border:1px solid #d8d8d8"></div>
<div class="t dlg" style="left:770px;top:656px">pinban.mdd</div>
<div class="btn" style="left:1188px;top:650px;width:82px;height:22px;line-height:20px;font-weight:bold;font-size:11px">Save</div>
<div class="t dlg" style="left:651px;top:683px">Files of type:</div>
<div class="a" style="left:767px;top:678px;width:415px;height:22px;background:#474747;border:1px solid #6a6a6a"></div>
<div class="t dlg" style="left:770px;top:684px">Module Definition File (*.mdd)</div>
<svg class="a" style="left:1165px;top:685px" width="12" height="8"><path d="M0 0H12L6 8z" fill="#fff"/></svg>
<div class="btn" style="left:1188px;top:678px;width:82px;height:22px;line-height:20px;font-weight:bold;font-size:11px">Cancel</div>
<div class="t dlg" style="left:652px;top:709px">Change Directory</div>
<div class="a" style="left:748px;top:708px;width:11px;height:11px;background:#fff"></div>
<svg class="a" style="left:1268px;top:719px" width="12" height="12"><g fill="#ccc"><rect x="8" y="0" width="2" height="2"/><rect x="4" y="4" width="2" height="2"/><rect x="8" y="4" width="2" height="2"/><rect x="0" y="8" width="2" height="2"/><rect x="4" y="8" width="2" height="2"/><rect x="8" y="8" width="2" height="2"/></g></svg>

<!-- EXTRAS START -->
<div class="a" style="left:1447px;top:0;width:290px;height:2px;background:linear-gradient(#d8d8d8,#fff)"></div>
<svg class="a" style="left:1798px;top:7px" width="12" height="3"><rect x="0" y="1" width="11" height="1" fill="#777"/></svg>
<svg class="a" style="left:1843px;top:3px" width="12" height="10"><path d="M0.5 3.5h7v6h-7z M2.5 3.5v-2.5h7v6h-2" fill="none" stroke="#777" stroke-width="1"/></svg>
<svg class="a" style="left:2px;top:1px" width="16" height="16" viewBox="0 0 16 16"><rect x="0.5" y="0.5" width="15" height="15" rx="2.5" fill="#0f2330" stroke="#c8203a"/><line x1="1" y1="1" x2="5" y2="5" stroke="#e8173a" stroke-width="1.7"/><line x1="11" y1="11" x2="15" y2="15" stroke="#e8173a" stroke-width="1.7"/><line x1="4" y1="12" x2="12" y2="4" stroke="#e8173a" stroke-width="1.8"/><circle cx="5.3" cy="5.3" r="2.4" fill="#fff"/><circle cx="11" cy="11" r="2.4" fill="#fff"/><circle cx="12.2" cy="3.8" r="2" fill="#0f2330" stroke="#e6eef0" stroke-width="1.3"/><circle cx="3.8" cy="12.2" r="2" fill="#0f2330" stroke="#e6eef0" stroke-width="1.3"/></svg>
<div class="t" style="left:1837px;top:22px;font-size:19px;font-weight:bold;color:#fff;transform:scaleX(0.8);transform-origin:left top">c</div>
<div class="t" style="left:1848px;top:22px;font-size:19px;font-weight:bold;color:#fff;transform:scaleX(0.8);transform-origin:left top">a</div>
<div class="a" style="left:1849px;top:23px;width:6px;height:2px;background:#e0102a"></div>
<div class="t" style="left:1859px;top:22px;font-size:19px;font-weight:bold;color:#fff;transform:scaleX(0.8);transform-origin:left top">d</div>
<div class="t" style="left:1870px;top:22px;font-size:19px;font-weight:bold;color:#fff;transform:scaleX(0.8);transform-origin:left top">e</div>
<div class="t" style="left:47px;top:225px;font-size:12px;color:#fff;transform:rotate(-90deg);transform-origin:left top;width:90px">Design Workflow</div>
<svg class="a" style="left:1078px;top:753px" width="60" height="14"><rect x="0" y="9" width="10" height="2" fill="#fff"/><path d="M24.5 5.5h6v5h-6zM26.5 5.5v-3h6v5h-2" fill="none" stroke="#fff" stroke-width="1"/><path d="M47 2l9 9M56 2l-9 9" stroke="#fff" stroke-width="1.3"/></svg>
<svg class="a" style="left:1487px;top:753px" width="60" height="14"><rect x="0" y="9" width="10" height="2" fill="#fff"/><path d="M24.5 5.5h6v5h-6zM26.5 5.5v-3h6v5h-2" fill="none" stroke="#fff" stroke-width="1"/><path d="M47 2l9 9M56 2l-9 9" stroke="#fff" stroke-width="1.3"/></svg>
<div class="a" style="left:0;top:0;width:1px;height:820px;background-image:linear-gradient(#0a78d8 50%,#fff 50%);background-size:1px 8px;background-position:0 1px"></div><div class="a" style="left:1px;top:45px;width:1px;height:775px;background:#1a1a1a"></div>
<!-- EXTRAS END -->
</body></html>
